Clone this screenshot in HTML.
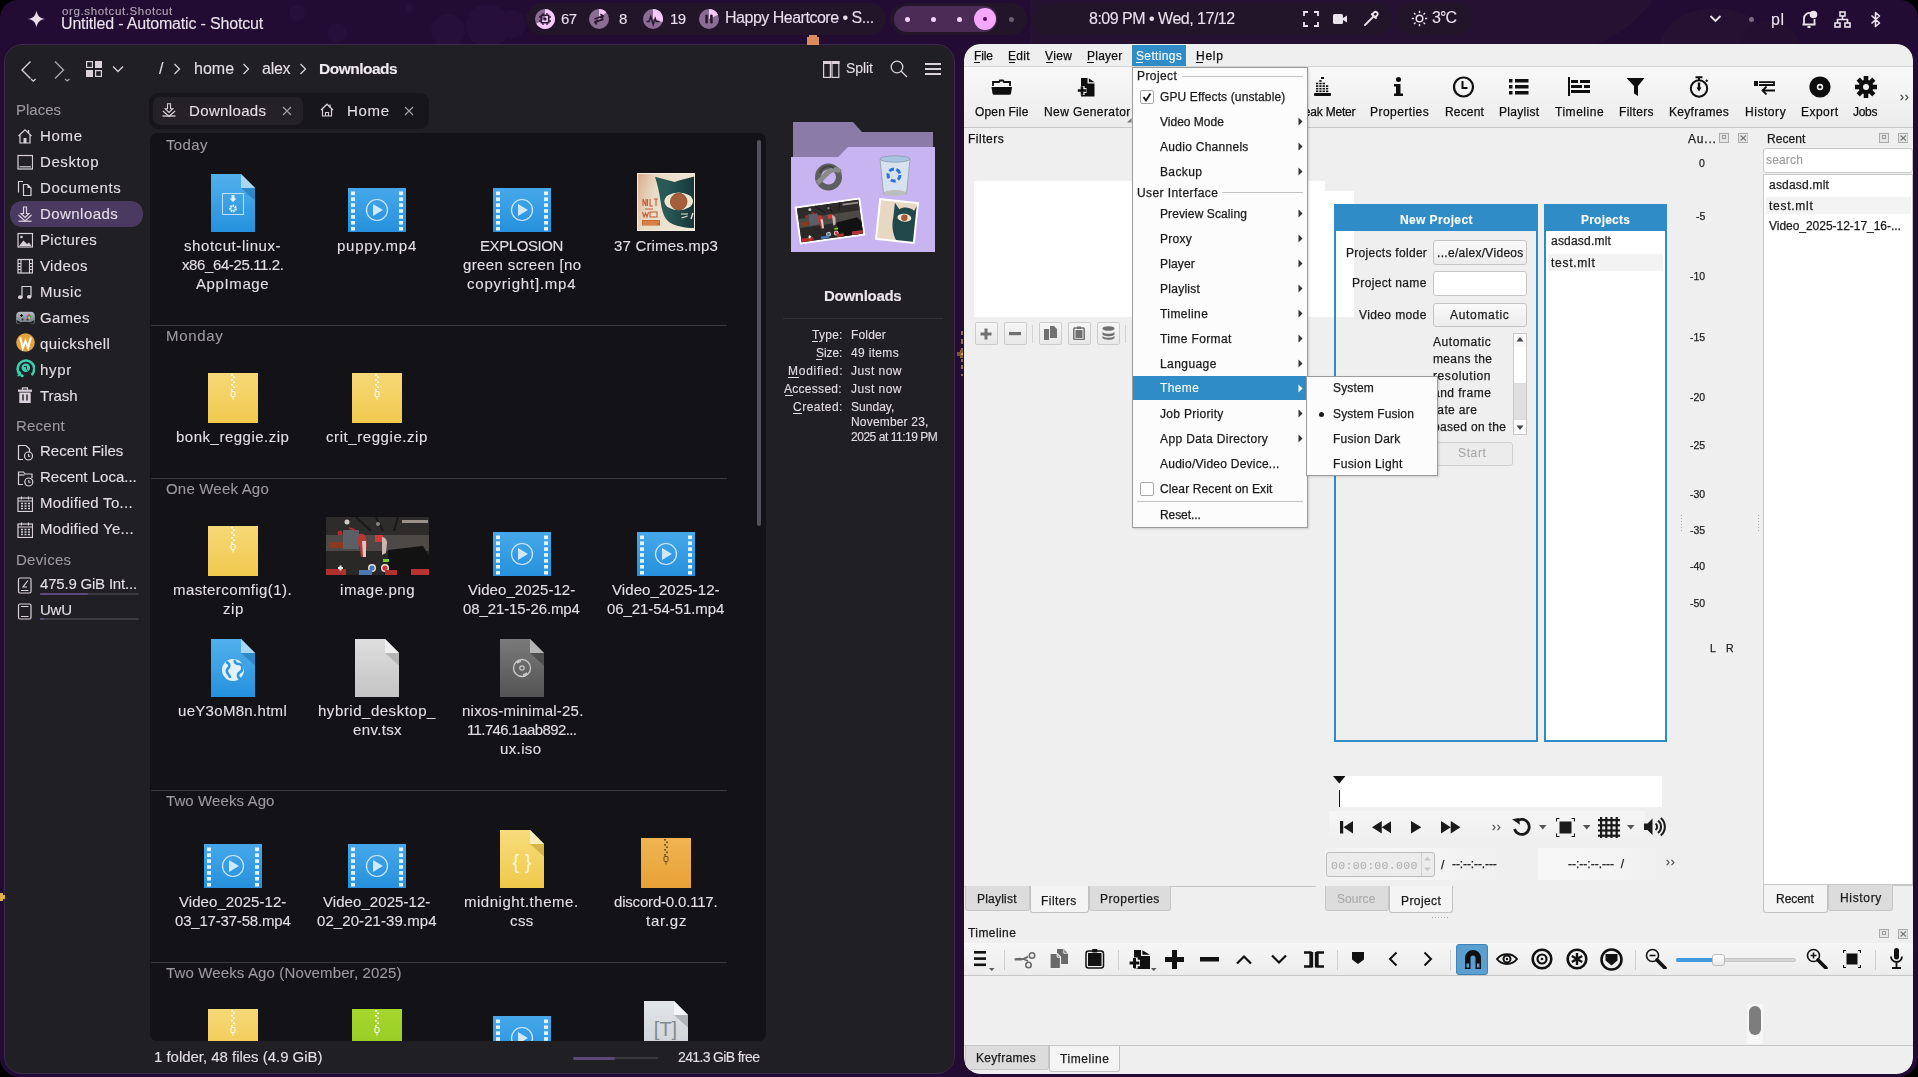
<!DOCTYPE html><html><head><meta charset="utf-8"><style>
html,body{margin:0;padding:0;width:1918px;height:1077px;overflow:hidden;background:#220c34;font-family:"Liberation Sans",sans-serif;}
body>div,body>svg,.w>div,.w>svg{position:absolute;box-sizing:border-box;}
.t{white-space:pre;line-height:1;will-change:transform;-webkit-text-stroke:0.25px currentColor;}
.l{-webkit-text-stroke:0.1px currentColor;}
</style></head><body>
<div style="left:1030px;top:-60px;width:640px;height:110px;background:#251232;border-radius:0 0 320px 0;"></div>
<div style="left:1660px;top:8px;width:110px;height:80px;background:#251232;border-radius:50%;"></div>
<div style="left:1740px;top:20px;width:60px;height:60px;background:#231030;border-radius:50%;"></div>
<div style="left:289px;top:5px;width:16px;height:16px;background:#26103a;border-radius:50%;"></div>
<div style="left:326.5px;top:23px;width:20px;height:20px;background:#26103a;border-radius:50%;"></div>
<div style="left:405px;top:4px;width:8px;height:8px;background:#26103a;border-radius:50%;"></div>
<div style="left:431px;top:14px;width:34px;height:34px;background:#26103a;border-radius:50%;"></div>
<div style="left:466px;top:4px;width:44px;height:44px;background:#26103a;border-radius:50%;"></div>
<div style="left:498px;top:10px;width:28px;height:28px;background:#26103a;border-radius:50%;"></div>
<div style="left:594px;top:2px;width:12px;height:12px;background:#26103a;border-radius:50%;"></div>
<svg style="left:0;top:0" width="20" height="20"><path d="M0 0H18A18 18 0 0 0 0 18Z" fill="#000"/></svg>
<svg style="left:1900px;top:0" width="18" height="20"><path d="M18 0H0A18 18 0 0 1 18 18Z" fill="#000"/></svg>
<svg style="left:0;top:1057px" width="20" height="20"><path d="M0 20H20A20 20 0 0 1 0 0Z" fill="#000"/></svg>
<svg style="left:1898px;top:1057px" width="20" height="20"><path d="M20 20H0A20 20 0 0 0 20 0Z" fill="#000"/></svg>
<svg style="left:27px;top:10px;" width="19" height="18" viewBox="0 0 19 18"><path d="M9.5 0.5C10.5 6 13 8.5 18.5 9C13 9.5 10.5 12 9.5 17.5C8.5 12 6 9.5 0.5 9C6 8.5 8.5 6 9.5 0.5Z" fill="#e8dde8"/></svg>
<div class="t l" style="top:6px;font-size:11.5px;color:#b4abb8;left:62px;letter-spacing:0.623px;">org.shotcut.Shotcut</div>
<div class="t l" style="top:16px;font-size:16px;color:#eae2ec;left:61px;letter-spacing:-0.171px;">Untitled - Automatic - Shotcut</div>
<div style="left:526px;top:3px;width:360px;height:32px;background:#22152a;border-radius:16px;"></div>
<svg style="left:535px;top:9px;" width="20" height="20" viewBox="0 0 20 20"><circle cx="10" cy="10" r="10" fill="#8b6c92"/><path d="M10 10L10 0A10 10 0 1 1 1.24 14.82Z" fill="#f6c9f8"/><rect x="6.3" y="6.3" width="7.4" height="7.4" fill="none" stroke="#2a1a2e" stroke-width="1.5"/><circle cx="10" cy="10" r="1.6" fill="#2a1a2e"/><path d="M8 4v2.3M12 4v2.3M8 13.7V16M12 13.7V16M4 8h2.3M4 12h2.3M13.7 8H16M13.7 12H16" stroke="#2a1a2e" stroke-width="1.3"/></svg>
<div class="t l" style="top:11px;font-size:15px;color:#e9dfeb;left:561px;letter-spacing:-0.635px;">67</div>
<svg style="left:589px;top:9px;" width="20" height="20" viewBox="0 0 20 20"><circle cx="10" cy="10" r="10" fill="#8b6c92"/><path d="M10 10L10 0A10 10 0 0 1 17.29 3.15Z" fill="#f6c9f8"/><path d="M5.5 10L13.8 7M11.3 5.2l2.9 1.7-1.5 2.8M14.5 10.2L6.2 13.2M8.7 11l-2.9 2.1 1.9 2.5" stroke="#2a1a2e" stroke-width="1.7" fill="none" stroke-linejoin="round"/></svg>
<div class="t l" style="top:11px;font-size:15px;color:#e9dfeb;left:619px;">8</div>
<svg style="left:643px;top:9px;" width="20" height="20" viewBox="0 0 20 20"><circle cx="10" cy="10" r="10" fill="#8b6c92"/><path d="M10 10L10 0A10 10 0 0 1 19.51 13.09Z" fill="#f6c9f8"/><path d="M3.5 12.5h2.5l1.8-5 2.4 8 2-6 1.2 3h3" stroke="#2a1a2e" stroke-width="1.5" fill="none"/></svg>
<div class="t l" style="top:11px;font-size:15px;color:#e9dfeb;left:670px;letter-spacing:-0.635px;">19</div>
<svg style="left:699px;top:9px;" width="20" height="20" viewBox="0 0 20 20"><circle cx="10" cy="10" r="10" fill="#8b6c92"/><path d="M10 10L10 0A10 10 0 0 1 19.05 5.74Z" fill="#f6c9f8"/><rect x="6.3" y="5.5" width="2.6" height="9" rx="1.2" fill="#2a1a2e"/><rect x="11.1" y="5.5" width="2.6" height="9" rx="1.2" fill="#2a1a2e"/></svg>
<div class="t l" style="top:10px;font-size:16px;color:#e9dfeb;left:725px;letter-spacing:-0.492px;">Happy Heartcore • S...</div>
<div style="left:890px;top:3px;width:137px;height:32px;background:#22152a;border-radius:16px;"></div>
<div style="left:894px;top:6px;width:103px;height:26px;background:#4b2c56;border-radius:13px;"></div>
<div style="left:905.0px;top:16.8px;width:5px;height:5px;background:#f7d0fa;border-radius:50%;"></div>
<div style="left:931.0px;top:16.8px;width:5px;height:5px;background:#f7d0fa;border-radius:50%;"></div>
<div style="left:957.0px;top:16.8px;width:5px;height:5px;background:#f7d0fa;border-radius:50%;"></div>
<div style="left:974px;top:8px;width:22px;height:22px;background:#f6a9fa;border-radius:50%;"></div>
<div style="left:983px;top:17px;width:4px;height:4px;background:#5a0a66;border-radius:50%;"></div>
<div style="left:1008.5px;top:16.8px;width:5px;height:5px;background:#6b5d70;border-radius:50%;"></div>
<div style="left:1032px;top:3px;width:360px;height:32px;background:#22152a;border-radius:16px;"></div>
<div class="t l" style="top:11px;font-size:16px;color:#eae2ec;left:1089px;letter-spacing:-0.500px;">8:09 PM • Wed, 17/12</div>
<svg style="left:1303px;top:11px;" width="16" height="16" viewBox="0 0 16 16"><path d="M1 5V1h4M11 1h4v4M15 11v4h-4M5 15H1v-4" stroke="#eae2ec" stroke-width="1.8" fill="none"/></svg>
<svg style="left:1332px;top:12px;" width="16" height="14" viewBox="0 0 16 14"><rect x="1" y="2" width="10" height="10" rx="1.5" fill="#eae2ec"/><path d="M11 6l4-2.5v7L11 8Z" fill="#eae2ec"/></svg>
<svg style="left:1363px;top:10px;" width="16" height="17" viewBox="0 0 16 17"><path d="M2 15l8-8M9 4l4 4M11 2.5a1.8 1.8 0 0 1 3 3l-2 2-3-3z" stroke="#eae2ec" stroke-width="1.8" fill="none" stroke-linecap="round"/></svg>
<div style="left:1396px;top:3px;width:76px;height:32px;background:#22152a;border-radius:16px;"></div>
<svg style="left:1411px;top:10px;" width="17" height="17" viewBox="0 0 17 17"><circle cx="8.5" cy="8.5" r="3.3" fill="none" stroke="#eae2ec" stroke-width="1.5"/><path d="M8.5 0.8v2.2M8.5 14v2.2M0.8 8.5H3M14 8.5h2.2M3 3l1.5 1.5M12.5 12.5L14 14M14 3l-1.5 1.5M4.5 12.5L3 14" stroke="#eae2ec" stroke-width="1.4"/></svg>
<div class="t l" style="top:10px;font-size:16px;color:#eae2ec;left:1432px;letter-spacing:-0.866px;">3°C</div>
<svg style="left:1709px;top:14px;" width="13" height="9" viewBox="0 0 13 9"><path d="M1.5 2l5 5 5-5" stroke="#eae2ec" stroke-width="1.8" fill="none"/></svg>
<div style="left:1748.5px;top:16.5px;width:5px;height:5px;background:#7a6c80;border-radius:50%;"></div>
<div class="t l" style="top:12px;font-size:16px;color:#eae2ec;left:1771px;letter-spacing:0.667px;">pl</div>
<svg style="left:1801px;top:10px;" width="17" height="19" viewBox="0 0 17 19"><path d="M3 14V8.5a5.5 5.5 0 0 1 7.5-5.2" stroke="#eae2ec" stroke-width="1.8" fill="none"/><path d="M1.5 14.5h13M6.5 17h3" stroke="#eae2ec" stroke-width="1.8"/><path d="M13.5 9v5" stroke="#eae2ec" stroke-width="1.8"/><circle cx="12.5" cy="4.5" r="3.8" fill="#eae2ec"/></svg>
<svg style="left:1834px;top:11px;" width="17" height="17" viewBox="0 0 17 17"><rect x="6" y="1" width="5" height="4" fill="none" stroke="#eae2ec" stroke-width="1.6"/><rect x="1" y="12" width="5" height="4" fill="none" stroke="#eae2ec" stroke-width="1.6"/><rect x="11" y="12" width="5" height="4" fill="none" stroke="#eae2ec" stroke-width="1.6"/><path d="M8.5 5v3.5M3.5 12V8.5h10V12" stroke="#eae2ec" stroke-width="1.6" fill="none"/></svg>
<svg style="left:1870px;top:11px;" width="12" height="17" viewBox="0 0 12 17"><path d="M1.5 4.5l8 7.5-4 3.5V1.5l4 3.5-8 7.5" stroke="#eae2ec" stroke-width="1.6" fill="none" stroke-linejoin="round"/></svg>
<div style="left:4px;top:44px;width:951px;height:1030px;background:#201f23;border:1px solid #3c2a4a;border-radius:18px;"></div>
<svg style="left:19px;top:59px;overflow:visible" width="20" height="26" viewBox="0 0 20 26"><path d="M11.5 2.5L3 11l8.5 8.5" stroke="#d9d2dc" stroke-width="1.4" fill="none"/><path d="M12 20l2.3 2.2 2.3-2.2" stroke="#d9d2dc" stroke-width="1.2" fill="none"/></svg>
<svg style="left:52px;top:59px;overflow:visible" width="20" height="26" viewBox="0 0 20 26"><path d="M3 2.5L11.5 11 3 19.5" stroke="#aaa4ad" stroke-width="1.4" fill="none"/><path d="M13 20l2.2 2 2.2-2" stroke="#aaa4ad" stroke-width="1.1" fill="none"/></svg>
<svg style="left:86px;top:61px;" width="16" height="16" viewBox="0 0 16 16"><rect x="0.6" y="0.6" width="5.8" height="5.8" fill="none" stroke="#d9d2dc" stroke-width="1.2"/><rect x="9" y="0" width="7" height="7" fill="#d9d2dc"/><rect x="0" y="9" width="7" height="7" fill="#d9d2dc"/><rect x="9.6" y="9.6" width="5.8" height="5.8" fill="none" stroke="#d9d2dc" stroke-width="1.2"/></svg>
<svg style="left:112px;top:65px;" width="12" height="8" viewBox="0 0 12 8"><path d="M1 1.5l5 5 5-5" stroke="#d9d2dc" stroke-width="1.3" fill="none"/></svg>
<div class="t l" style="top:61px;font-size:16px;color:#e4dee6;left:159px;">/</div>
<svg style="left:173px;top:63px;" width="8" height="12" viewBox="0 0 8 12"><path d="M1.5 1l5 5-5 5" stroke="#d9d2dc" stroke-width="1.3" fill="none"/></svg>
<svg style="left:242px;top:63px;" width="8" height="12" viewBox="0 0 8 12"><path d="M1.5 1l5 5-5 5" stroke="#d9d2dc" stroke-width="1.3" fill="none"/></svg>
<svg style="left:299px;top:63px;" width="8" height="12" viewBox="0 0 8 12"><path d="M1.5 1l5 5-5 5" stroke="#d9d2dc" stroke-width="1.3" fill="none"/></svg>
<div class="t l" style="top:61px;font-size:16px;color:#e4dee6;left:194px;letter-spacing:0.032px;">home</div>
<div class="t l" style="top:61px;font-size:16px;color:#e4dee6;left:262px;letter-spacing:-0.244px;">alex</div>
<div class="t l" style="top:61px;font-size:15.5px;color:#f0ebf2;font-weight:700;left:319px;letter-spacing:-0.511px;">Downloads</div>
<svg style="left:823px;top:61px;" width="17" height="17" viewBox="0 0 17 17"><rect x="0.6" y="0.6" width="6.8" height="15.8" fill="none" stroke="#d9d2dc" stroke-width="1.2"/><rect x="9" y="0.6" width="6.8" height="15.8" fill="none" stroke="#d9d2dc" stroke-width="1.2"/><rect x="0" y="0" width="8" height="3" fill="#d9d2dc"/><rect x="8.5" y="0" width="8" height="3" fill="#d9d2dc"/></svg>
<div class="t l" style="top:61px;font-size:14px;color:#e4dee6;left:846px;letter-spacing:-0.064px;">Split</div>
<svg style="left:890px;top:60px;" width="18" height="18" viewBox="0 0 18 18"><circle cx="7" cy="7" r="5.8" fill="none" stroke="#d9d2dc" stroke-width="1.3"/><path d="M11 11l6 6" stroke="#d9d2dc" stroke-width="1.3"/></svg>
<div style="left:925px;top:63px;width:16px;height:2px;background:#d9d2dc;"></div>
<div style="left:925px;top:68px;width:16px;height:2px;background:#d9d2dc;"></div>
<div style="left:925px;top:73px;width:16px;height:2px;background:#d9d2dc;"></div>
<div style="left:149px;top:93px;width:280px;height:36px;background:#17161a;border-radius:9px;"></div>
<div style="left:153px;top:97px;width:150px;height:28px;background:#242228;border-radius:7px;"></div>
<svg style="left:162px;top:103px;" width="14" height="14" viewBox="0 0 14 14"><path d="M5.5 0.8h3v5h2.3L7 9.5 3.2 5.8h2.3z" stroke="#d9d2dc" stroke-width="1.1" fill="none"/><path d="M0.5 13h13" stroke="#d9d2dc" stroke-width="1.3"/><path d="M0.8 8L7 13.2 13.2 8" stroke="#d9d2dc" stroke-width="1.1" fill="none"/></svg>
<div class="t l" style="top:103px;font-size:15px;color:#e4dee6;left:189px;letter-spacing:0.355px;">Downloads</div>
<svg style="left:282px;top:106px;" width="10" height="10" viewBox="0 0 10 10"><path d="M1 1l8 8M9 1l-8 8" stroke="#a19ba5" stroke-width="1.2"/></svg>
<svg style="left:320px;top:103px;" width="14" height="14" viewBox="0 0 14 14"><path d="M1 7L7 1.2 13 7M2.5 6V13H11.5V6" stroke="#d9d2dc" stroke-width="1.2" fill="none"/><path d="M5.5 13V9.5h3V13" stroke="#d9d2dc" stroke-width="1.1" fill="none"/><path d="M10 1.5v3" stroke="#d9d2dc" stroke-width="1.3"/></svg>
<div class="t l" style="top:103px;font-size:15px;color:#e4dee6;left:347px;letter-spacing:0.679px;">Home</div>
<svg style="left:404px;top:106px;" width="10" height="10" viewBox="0 0 10 10"><path d="M1 1l8 8M9 1l-8 8" stroke="#a19ba5" stroke-width="1.2"/></svg>
<div style="left:10px;top:201px;width:133px;height:26px;background:#4a3a61;border-radius:12px;"></div>
<div class="t l" style="top:102px;font-size:15px;color:#9e99a2;left:16px;">Places</div>
<svg style="left:17px;top:128.4px;" width="16" height="16" viewBox="0 0 16 16"><path d="M1.5 8L8 1.8 14.5 8M3 6.5V15H13V6.5" stroke="#d9d2dc" stroke-width="1.2" fill="none"/><rect x="6.5" y="10" width="3" height="5" fill="#d9d2dc"/><path d="M11.5 2v3" stroke="#d9d2dc" stroke-width="1.4"/></svg>
<div class="t l" style="top:128px;font-size:15px;color:#e4dee6;left:40px;letter-spacing:0.679px;">Home</div>
<svg style="left:17px;top:154.4px;" width="16" height="16" viewBox="0 0 16 16"><rect x="1" y="1.5" width="14.5" height="13.5" fill="none" stroke="#d9d2dc" stroke-width="1.2"/><path d="M2.5 12.8h11.5" stroke="#d9d2dc" stroke-width="1.2"/></svg>
<div class="t l" style="top:154px;font-size:15px;color:#e4dee6;left:40px;letter-spacing:0.587px;">Desktop</div>
<svg style="left:17px;top:180.4px;" width="16" height="16" viewBox="0 0 16 16"><path d="M1.5 12.5V1.5H6" stroke="#d9d2dc" stroke-width="1.2" fill="none"/><path d="M6.5 4.5H10.5L14 8V15.5H6.5Z" stroke="#d9d2dc" stroke-width="1.2" fill="none"/><path d="M10.5 4.5V8H14" fill="#d9d2dc"/></svg>
<div class="t l" style="top:180px;font-size:15px;color:#e4dee6;left:40px;letter-spacing:0.598px;">Documents</div>
<svg style="left:17px;top:206.4px;" width="16" height="16" viewBox="0 0 16 16"><path d="M6.5 1h3v6.5h2.5L8 11.5 4 7.5h2.5z" stroke="#d9d2dc" stroke-width="1.2" fill="none"/><path d="M1.5 15.2h13" stroke="#d9d2dc" stroke-width="1.3"/><path d="M1.5 9L8 15 14.5 9" stroke="#d9d2dc" stroke-width="1.2" fill="none"/></svg>
<div class="t l" style="top:206px;font-size:15px;color:#e4dee6;left:40px;letter-spacing:0.443px;">Downloads</div>
<svg style="left:17px;top:232.4px;" width="16" height="16" viewBox="0 0 16 16"><rect x="1" y="1.5" width="14.5" height="13.5" fill="none" stroke="#d9d2dc" stroke-width="1.2"/><path d="M2 14L6.5 8.5 10 12 12 10.5 14.5 14z" fill="#d9d2dc"/><circle cx="4.5" cy="5" r="1.3" fill="#d9d2dc"/></svg>
<div class="t l" style="top:232px;font-size:15px;color:#e4dee6;left:40px;letter-spacing:0.352px;">Pictures</div>
<svg style="left:17px;top:258.4px;" width="16" height="16" viewBox="0 0 16 16"><rect x="1" y="1.5" width="14.5" height="13.5" fill="none" stroke="#d9d2dc" stroke-width="1.2"/><path d="M4 1.5v13.5M12.5 1.5v13.5M1 5.5h3M1 8.5h3M1 11.5h3M12.5 5.5h3M12.5 8.5h3M12.5 11.5h3" stroke="#d9d2dc" stroke-width="1.1"/></svg>
<div class="t l" style="top:258px;font-size:15px;color:#e4dee6;left:40px;letter-spacing:0.391px;">Videos</div>
<svg style="left:17px;top:284.4px;" width="16" height="16" viewBox="0 0 16 16"><path d="M5 13V2.5h9v10" stroke="#d9d2dc" stroke-width="1.2" fill="none"/><ellipse cx="3.3" cy="13.2" rx="2.3" ry="1.9" fill="#d9d2dc"/><ellipse cx="12.2" cy="12.8" rx="2.3" ry="1.9" fill="#d9d2dc"/></svg>
<div class="t l" style="top:284px;font-size:15px;color:#e4dee6;left:40px;letter-spacing:0.570px;">Music</div>
<svg style="left:16px;top:311.4px;" width="19" height="14" viewBox="0 0 19 14"><defs><linearGradient id="gp" x1="0" y1="0" x2="0" y2="1"><stop offset="0" stop-color="#b8bec6"/><stop offset="1" stop-color="#6c737c"/></linearGradient></defs><path d="M4 0.8h11c2.2 0 3.5 1.5 3.8 3.5l.2 6c0 2-1.6 3.2-3.2 2.4L13 11H6l-2.8 1.7C1.6 13.5 0 12.3 0 10.3l.2-6C.5 2.3 1.8.8 4 .8z" fill="url(#gp)"/><path d="M0.5 9c0 3 2 4 3.5 3L6 11H4z M18.5 9c0 3-2 4-3.5 3L13 11h2z" fill="#1a1a1a"/><path d="M4 4.5h3M5.5 3v3" stroke="#111" stroke-width="1.2"/><circle cx="13" cy="4" r="0.9" fill="#d33"/><circle cx="14.7" cy="5.5" r="0.9" fill="#3a3"/><circle cx="11.5" cy="5.5" r="0.9" fill="#36d"/><circle cx="13" cy="7" r="0.9" fill="#eb2"/><circle cx="6.5" cy="8.5" r="1.1" fill="#333"/><circle cx="11.5" cy="8.5" r="1.1" fill="#333"/></svg>
<div class="t l" style="top:310px;font-size:15px;color:#e4dee6;left:40px;letter-spacing:0.276px;">Games</div>
<svg style="left:16px;top:333.4px;" width="19" height="19" viewBox="0 0 19 19"><circle cx="9.5" cy="9.5" r="9.3" fill="#e4a43a"/><path d="M4.2 4.5l2.6 10.5 2.7-7 2.6 7 2.7-10.5" stroke="#fff" stroke-width="2.1" fill="none" stroke-linejoin="miter"/></svg>
<div class="t l" style="top:336px;font-size:15px;color:#e4dee6;left:40px;letter-spacing:0.454px;">quickshell</div>
<svg style="left:16px;top:359.4px;" width="19" height="19" viewBox="0 0 19 19"><path d="M5 16.5A8.3 8.3 0 1 1 15.5 16" stroke="#3ccfb0" stroke-width="2.6" fill="none"/><circle cx="9.8" cy="8.8" r="4.3" fill="#3ccfb0"/><path d="M8 7.5h2.5v2.5M11 10.5l1 1.5" stroke="#1f2a2a" stroke-width="1" fill="none"/><circle cx="3.6" cy="13.8" r="1.6" fill="#3ccfb0"/><circle cx="6.2" cy="16.8" r="1.5" fill="#3ccfb0"/><circle cx="2.2" cy="16.6" r="0.9" fill="#3ccfb0"/></svg>
<div class="t l" style="top:362px;font-size:15px;color:#e4dee6;left:40px;letter-spacing:0.657px;">hypr</div>
<svg style="left:17px;top:387.4px;" width="16" height="17" viewBox="0 0 16 17"><path d="M5.5 2.8V0.8h5v2" stroke="#d9d2dc" stroke-width="1.2" fill="none"/><rect x="1" y="2.6" width="14" height="2.2" fill="#d9d2dc"/><path d="M2.3 5.5h11.4V16H2.3Z" fill="#d9d2dc"/><path d="M6 7.5v6M10 7.5v6" stroke="#201f23" stroke-width="1.4"/></svg>
<div class="t l" style="top:388px;font-size:15px;color:#e4dee6;left:40px;letter-spacing:-0.034px;">Trash</div>
<div class="t l" style="top:418px;font-size:15px;color:#9e99a2;left:16px;letter-spacing:0.225px;">Recent</div>
<svg style="left:17px;top:444px;" width="17" height="17" viewBox="0 0 17 17"><path d="M6 15.5H1.5V1.5H9l3.5 3.5V8" stroke="#d9d2dc" stroke-width="1.2" fill="none"/><circle cx="11.5" cy="12" r="4" fill="#201f23" stroke="#d9d2dc" stroke-width="1.2"/><path d="M11.5 10v2.2h1.8" stroke="#d9d2dc" stroke-width="1.1" fill="none"/></svg>
<div class="t l" style="top:443px;font-size:15px;color:#e4dee6;left:40px;">Recent Files</div>
<svg style="left:17px;top:470px;" width="17" height="17" viewBox="0 0 17 17"><path d="M6 14.5H1.5V2h5l1.5 2H15v4" stroke="#d9d2dc" stroke-width="1.2" fill="none"/><path d="M1.5 5h6" stroke="#d9d2dc" stroke-width="1.2"/><circle cx="11.8" cy="12" r="4" fill="#201f23" stroke="#d9d2dc" stroke-width="1.2"/><path d="M11.8 10v2.2h1.8" stroke="#d9d2dc" stroke-width="1.1" fill="none"/></svg>
<div class="t l" style="top:469px;font-size:15px;color:#e4dee6;left:40px;">Recent Loca...</div>
<svg style="left:17px;top:496px;" width="16" height="16" viewBox="0 0 16 16"><rect x="1" y="2" width="14.5" height="13.5" fill="none" stroke="#d9d2dc" stroke-width="1.2"/><path d="M4.5 0.5v3M11.5 0.5v3M1 5h14.5" stroke="#d9d2dc" stroke-width="1.2"/><path d="M4 7.5h2M7.5 7.5h2M11 7.5h2M4 10h2M7.5 10h2M11 10h2M4 12.5h2M7.5 12.5h2M11 12.5h2" stroke="#d9d2dc" stroke-width="1.3"/></svg>
<div class="t l" style="top:495px;font-size:15px;color:#e4dee6;left:40px;letter-spacing:0.280px;">Modified To...</div>
<svg style="left:17px;top:522px;" width="16" height="16" viewBox="0 0 16 16"><rect x="1" y="2" width="14.5" height="13.5" fill="none" stroke="#d9d2dc" stroke-width="1.2"/><path d="M4.5 0.5v3M11.5 0.5v3M1 5h14.5" stroke="#d9d2dc" stroke-width="1.2"/><path d="M4 7.5h2M7.5 7.5h2M11 7.5h2M4 10h2M7.5 10h2M11 10h2M4 12.5h2M7.5 12.5h2M11 12.5h2" stroke="#d9d2dc" stroke-width="1.3"/></svg>
<div class="t l" style="top:521px;font-size:15px;color:#e4dee6;left:40px;letter-spacing:0.278px;">Modified Ye...</div>
<div class="t l" style="top:552px;font-size:15px;color:#9e99a2;left:16px;letter-spacing:0.283px;">Devices</div>
<svg style="left:17px;top:577px;" width="16" height="17" viewBox="0 0 16 17"><rect x="1.5" y="1" width="12.5" height="15" rx="1.5" fill="none" stroke="#d9d2dc" stroke-width="1.2"/><path d="M4 13.5h7.5M11 3.5L6 10h4" stroke="#d9d2dc" stroke-width="1.2" fill="none"/></svg>
<div class="t l" style="top:576px;font-size:15px;color:#e4dee6;left:40px;letter-spacing:-0.200px;">475.9 GiB Int...</div>
<div style="left:40px;top:592.5px;width:99px;height:2px;background:#3d3a42;border-radius:1px;"></div>
<div style="left:40px;top:592.5px;width:48px;height:2px;background:#5b4a78;border-radius:1px;"></div>
<svg style="left:17px;top:603px;" width="16" height="17" viewBox="0 0 16 17"><rect x="1.5" y="1" width="12.5" height="15" rx="1.5" fill="none" stroke="#d9d2dc" stroke-width="1.2"/><path d="M4 13.5h7.5M4 3.5h7.5" stroke="#d9d2dc" stroke-width="1.2" fill="none"/></svg>
<div class="t l" style="top:602px;font-size:15px;color:#e4dee6;left:40px;letter-spacing:-0.224px;">UwU</div>
<div style="left:40px;top:618px;width:99px;height:2px;background:#3d3a42;border-radius:1px;"></div>
<div style="left:40px;top:618px;width:4px;height:2px;background:#5b4a78;border-radius:1px;"></div>
<div style="left:150px;top:133px;width:616px;height:908px;background:#131217;border-radius:7px;"></div>
<div style="left:757px;top:140px;width:4px;height:386px;background:#55515a;border-radius:2px;"></div>
<div class="t l" style="top:137px;font-size:15px;color:#9e99a2;left:166px;letter-spacing:0.356px;">Today</div>
<div style="left:151px;top:325px;width:576px;height:1px;background:#3a383e;"></div>
<div class="t l" style="top:328px;font-size:15px;color:#9e99a2;left:166px;letter-spacing:0.657px;">Monday</div>
<div style="left:151px;top:478px;width:576px;height:1px;background:#3a383e;"></div>
<div class="t l" style="top:481px;font-size:15px;color:#9e99a2;left:166px;letter-spacing:0.191px;">One Week Ago</div>
<div style="left:151px;top:790px;width:576px;height:1px;background:#3a383e;"></div>
<div class="t l" style="top:793px;font-size:15px;color:#9e99a2;left:166px;letter-spacing:0.095px;">Two Weeks Ago</div>
<div style="left:151px;top:962px;width:576px;height:1px;background:#3a383e;"></div>
<div class="t l" style="top:965px;font-size:15px;color:#9e99a2;left:166px;letter-spacing:0.135px;">Two Weeks Ago (November, 2025)</div>
<svg style="left:211px;top:174px;" width="44" height="58" viewBox="0 0 44 58"><defs><linearGradient id="g1" x1="0" y1="0" x2="0" y2="1"><stop offset="0" stop-color="#52b0ec"/><stop offset="1" stop-color="#2591dd"/></linearGradient></defs><path d="M0 0H30L44 14V58H0Z" fill="url(#g1)"/><path d="M30 14L44 26.6V14Z" fill="#1a6fb0" opacity="0.55"/><path d="M30 0V14H44Z" fill="#a9d8f5"/><g transform="translate(2 4)"><rect x="9.5" y="15.5" width="21" height="21" fill="none" stroke="#bfe0f7" stroke-width="1"/><path d="M18.5 17h3v3.5h2L20 24l-3.5-3.5h2z" fill="#e8f4fc"/><circle cx="20" cy="30.5" r="2.6" fill="none" stroke="#e8f4fc" stroke-width="2.6" stroke-dasharray="1.5 0.8"/><circle cx="20" cy="30.5" r="1.2" fill="#3a9ce4"/></g></svg>
<div class="t l" style="top:238px;font-size:15px;color:#e4dee6;left:184px;letter-spacing:0.565px;">shotcut-linux-</div>
<div class="t l" style="top:257px;font-size:15px;color:#e4dee6;left:182px;letter-spacing:-0.390px;">x86_64-25.11.2.</div>
<div class="t l" style="top:276px;font-size:15px;color:#e4dee6;left:196px;letter-spacing:0.610px;">AppImage</div>
<svg style="left:348px;top:188px;" width="58" height="44" viewBox="0 0 58 44"><defs><linearGradient id="g2" x1="0" y1="0" x2="0" y2="1"><stop offset="0" stop-color="#46a8ea"/><stop offset="1" stop-color="#2590dd"/></linearGradient></defs><rect width="58" height="44" fill="url(#g2)"/><rect x="3" y="3.5" width="4" height="3.6" fill="#e6f3fc"/><rect x="51" y="3.5" width="4" height="3.6" fill="#e6f3fc"/><rect x="3" y="9.4" width="4" height="3.6" fill="#e6f3fc"/><rect x="51" y="9.4" width="4" height="3.6" fill="#e6f3fc"/><rect x="3" y="15.3" width="4" height="3.6" fill="#e6f3fc"/><rect x="51" y="15.3" width="4" height="3.6" fill="#e6f3fc"/><rect x="3" y="21.2" width="4" height="3.6" fill="#e6f3fc"/><rect x="51" y="21.2" width="4" height="3.6" fill="#e6f3fc"/><rect x="3" y="27.1" width="4" height="3.6" fill="#e6f3fc"/><rect x="51" y="27.1" width="4" height="3.6" fill="#e6f3fc"/><rect x="3" y="33.0" width="4" height="3.6" fill="#e6f3fc"/><rect x="51" y="33.0" width="4" height="3.6" fill="#e6f3fc"/><rect x="3" y="38.9" width="4" height="3.6" fill="#e6f3fc"/><rect x="51" y="38.9" width="4" height="3.6" fill="#e6f3fc"/><circle cx="29.0" cy="22.0" r="10.5" fill="none" stroke="#cfe8fa" stroke-width="1.2"/><path d="M25.0 16.0L35.0 22.0L25.0 28.0Z" fill="#cfe8fa"/></svg>
<div class="t l" style="top:238px;font-size:15px;color:#e4dee6;left:337px;letter-spacing:0.768px;">puppy.mp4</div>
<svg style="left:493px;top:188px;" width="58" height="44" viewBox="0 0 58 44"><defs><linearGradient id="g3" x1="0" y1="0" x2="0" y2="1"><stop offset="0" stop-color="#46a8ea"/><stop offset="1" stop-color="#2590dd"/></linearGradient></defs><rect width="58" height="44" fill="url(#g3)"/><rect x="3" y="3.5" width="4" height="3.6" fill="#e6f3fc"/><rect x="51" y="3.5" width="4" height="3.6" fill="#e6f3fc"/><rect x="3" y="9.4" width="4" height="3.6" fill="#e6f3fc"/><rect x="51" y="9.4" width="4" height="3.6" fill="#e6f3fc"/><rect x="3" y="15.3" width="4" height="3.6" fill="#e6f3fc"/><rect x="51" y="15.3" width="4" height="3.6" fill="#e6f3fc"/><rect x="3" y="21.2" width="4" height="3.6" fill="#e6f3fc"/><rect x="51" y="21.2" width="4" height="3.6" fill="#e6f3fc"/><rect x="3" y="27.1" width="4" height="3.6" fill="#e6f3fc"/><rect x="51" y="27.1" width="4" height="3.6" fill="#e6f3fc"/><rect x="3" y="33.0" width="4" height="3.6" fill="#e6f3fc"/><rect x="51" y="33.0" width="4" height="3.6" fill="#e6f3fc"/><rect x="3" y="38.9" width="4" height="3.6" fill="#e6f3fc"/><rect x="51" y="38.9" width="4" height="3.6" fill="#e6f3fc"/><circle cx="29.0" cy="22.0" r="10.5" fill="none" stroke="#cfe8fa" stroke-width="1.2"/><path d="M25.0 16.0L35.0 22.0L25.0 28.0Z" fill="#cfe8fa"/></svg>
<div class="t l" style="top:238px;font-size:15px;color:#e4dee6;left:480px;letter-spacing:-0.406px;">EXPLOSION</div>
<div class="t l" style="top:257px;font-size:15px;color:#e4dee6;left:463px;letter-spacing:0.372px;">green screen [no</div>
<div class="t l" style="top:276px;font-size:15px;color:#e4dee6;left:467px;letter-spacing:0.782px;">copyright].mp4</div>
<svg style="left:637px;top:173px;" width="58" height="58" viewBox="0 0 58 58"><defs><linearGradient id="g4" x1="0" y1="0" x2="1" y2="0.3"><stop offset="0" stop-color="#d9ae8e"/><stop offset="0.35" stop-color="#eadcc6"/><stop offset="1" stop-color="#efe7d6"/></linearGradient><linearGradient id="g4h" x1="0" y1="0" x2="1" y2="0"><stop offset="0.3" stop-color="#285a58"/><stop offset="1" stop-color="#173638"/></linearGradient></defs><rect width="58" height="58" fill="#f3ece2"/><rect x="1" y="1" width="56" height="56" fill="url(#g4)"/><path d="M18 3.8L37.6 9C43 7 50 5.5 57 3.5V55C48 55 38 53 32 49 27 45 25 38 23.5 28 22.5 20 20.5 12 18 3.8Z" fill="url(#g4h)"/><ellipse cx="41.7" cy="28.3" rx="14.3" ry="8.9" fill="#ede6d2"/><circle cx="41.7" cy="28.6" r="8.3" fill="#a4603a" stroke="#8e4426" stroke-width="0.8"/><path d="M44 41h7M44.5 45l6-2" stroke="#e8e4dc" stroke-width="1.2"/><path d="M56 40l-2 6" stroke="#e8e4dc" stroke-width="1.4"/><path d="M6 26v7M6 26l3 7V26M10.5 26v7M13 26v7h3M17 26h4M19 26v7" stroke="#c45a34" stroke-width="1.1" fill="none"/><path d="M8 36h8" stroke="#c45a34" stroke-width="1"/><path d="M5.5 39l1.5 5 1.5-4 1.5 4 1.5-5M13 39h7v5h-7z" stroke="#c45a34" stroke-width="1.1" fill="none"/><rect x="5" y="47" width="18" height="5.5" fill="#c8692c"/><path d="M6 49h16M6 51h14" stroke="#f0c090" stroke-width="0.6"/></svg>
<div class="t l" style="top:238px;font-size:15px;color:#e4dee6;left:614px;letter-spacing:0.179px;">37 Crimes.mp3</div>
<svg style="left:208px;top:373px;" width="50" height="50" viewBox="0 0 50 50"><defs><linearGradient id="g5" x1="0" y1="0" x2="0" y2="1"><stop offset="0" stop-color="#f6d877"/><stop offset="1" stop-color="#f0c94e"/></linearGradient></defs><rect width="50" height="50" fill="url(#g5)"/><rect x="23.0" y="1.0" width="2" height="1.6" fill="#fff" opacity="0.9"/><rect x="25.0" y="3.5" width="2" height="1.6" fill="#fff" opacity="0.9"/><rect x="23.0" y="6.0" width="2" height="1.6" fill="#fff" opacity="0.9"/><rect x="25.0" y="8.5" width="2" height="1.6" fill="#fff" opacity="0.9"/><rect x="23.0" y="11.0" width="2" height="1.6" fill="#fff" opacity="0.9"/><rect x="25.0" y="13.5" width="2" height="1.6" fill="#fff" opacity="0.9"/><rect x="23.0" y="16.0" width="2" height="1.6" fill="#fff" opacity="0.9"/><rect x="23.0" y="18.5" width="4" height="5" rx="1" fill="none" stroke="#fff" stroke-width="1"/><path d="M25.0 23.5v3" stroke="#fff" stroke-width="1"/></svg>
<div class="t l" style="top:429px;font-size:15px;color:#e4dee6;left:176px;letter-spacing:0.503px;">bonk_reggie.zip</div>
<svg style="left:352px;top:373px;" width="50" height="50" viewBox="0 0 50 50"><defs><linearGradient id="g6" x1="0" y1="0" x2="0" y2="1"><stop offset="0" stop-color="#f6d877"/><stop offset="1" stop-color="#f0c94e"/></linearGradient></defs><rect width="50" height="50" fill="url(#g6)"/><rect x="23.0" y="1.0" width="2" height="1.6" fill="#fff" opacity="0.9"/><rect x="25.0" y="3.5" width="2" height="1.6" fill="#fff" opacity="0.9"/><rect x="23.0" y="6.0" width="2" height="1.6" fill="#fff" opacity="0.9"/><rect x="25.0" y="8.5" width="2" height="1.6" fill="#fff" opacity="0.9"/><rect x="23.0" y="11.0" width="2" height="1.6" fill="#fff" opacity="0.9"/><rect x="25.0" y="13.5" width="2" height="1.6" fill="#fff" opacity="0.9"/><rect x="23.0" y="16.0" width="2" height="1.6" fill="#fff" opacity="0.9"/><rect x="23.0" y="18.5" width="4" height="5" rx="1" fill="none" stroke="#fff" stroke-width="1"/><path d="M25.0 23.5v3" stroke="#fff" stroke-width="1"/></svg>
<div class="t l" style="top:429px;font-size:15px;color:#e4dee6;left:326px;letter-spacing:0.570px;">crit_reggie.zip</div>
<svg style="left:208px;top:526px;" width="50" height="50" viewBox="0 0 50 50"><defs><linearGradient id="g7" x1="0" y1="0" x2="0" y2="1"><stop offset="0" stop-color="#f6d877"/><stop offset="1" stop-color="#f0c94e"/></linearGradient></defs><rect width="50" height="50" fill="url(#g7)"/><rect x="23.0" y="1.0" width="2" height="1.6" fill="#fff" opacity="0.9"/><rect x="25.0" y="3.5" width="2" height="1.6" fill="#fff" opacity="0.9"/><rect x="23.0" y="6.0" width="2" height="1.6" fill="#fff" opacity="0.9"/><rect x="25.0" y="8.5" width="2" height="1.6" fill="#fff" opacity="0.9"/><rect x="23.0" y="11.0" width="2" height="1.6" fill="#fff" opacity="0.9"/><rect x="25.0" y="13.5" width="2" height="1.6" fill="#fff" opacity="0.9"/><rect x="23.0" y="16.0" width="2" height="1.6" fill="#fff" opacity="0.9"/><rect x="23.0" y="18.5" width="4" height="5" rx="1" fill="none" stroke="#fff" stroke-width="1"/><path d="M25.0 23.5v3" stroke="#fff" stroke-width="1"/></svg>
<div class="t l" style="top:582px;font-size:15px;color:#e4dee6;left:173px;letter-spacing:0.402px;">mastercomfig(1).</div>
<div class="t l" style="top:601px;font-size:15px;color:#e4dee6;left:223px;letter-spacing:0.588px;">zip</div>
<svg style="left:326px;top:517px;" width="103" height="58" viewBox="0 0 103 58"><rect width="103" height="58" fill="#3b3937"/><path d="M0 0H103V18H0Z" fill="#2e2c2b"/><path d="M30 0L45 14M50 0L57 14M72 0L68 14" stroke="#1b1a1a" stroke-width="2"/><path d="M0 18H103V34H0Z" fill="#4c4946"/><circle cx="21" cy="5" r="2.5" fill="#cfcac4"/><circle cx="52" cy="7" r="2" fill="#8a8580"/><path d="M17 13H33V32H17Z" fill="#5b6068"/><path d="M3 25H17V31H3Z" fill="#8a3820"/><circle cx="14" cy="16" r="2.5" fill="#b02a2a"/><path d="M23 10l6 2v2l-6-2z" fill="#b03030"/><path d="M0 34H103V58H0Z" fill="#2a2826"/><path d="M33 17c3-1 6 0 7 3l1 8-2 12h-4l-1-10-3-4z" fill="#b13a36"/><path d="M36 24h4v16h-3z" fill="#d8c8c0"/><path d="M49 18h8v7h-8z" fill="#d43a3a"/><path d="M56 20c3 0 5 3 5 6l-1 10-4 2z" fill="#c9b8b0"/><path d="M62 33l35-4 6 10v19H58l4-12z" fill="#121212"/><path d="M57 42h6v3h-6z" fill="#7ad02a"/><path d="M0 52h20v6H0z" fill="#b03030"/><path d="M12 51h5M14.5 48.5v5" stroke="#eee" stroke-width="2"/><circle cx="46" cy="51" r="4" fill="#e8e0d8"/><circle cx="46" cy="51" r="2.6" fill="#4a78b0"/><path d="M33 53h13v5H33z" fill="#4a78b0"/><circle cx="59" cy="51" r="4" fill="#e8e0d8"/><circle cx="59" cy="51" r="2.6" fill="#c03838"/><path d="M59 53h12v5H59z" fill="#b03030"/><path d="M85 52h18v6H85z" fill="#b83434"/><path d="M76 3h26v3H76z" fill="#9a9288"/></svg>
<div class="t l" style="top:582px;font-size:15px;color:#e4dee6;left:340px;letter-spacing:0.563px;">image.png</div>
<svg style="left:493px;top:532px;" width="58" height="44" viewBox="0 0 58 44"><defs><linearGradient id="g8" x1="0" y1="0" x2="0" y2="1"><stop offset="0" stop-color="#46a8ea"/><stop offset="1" stop-color="#2590dd"/></linearGradient></defs><rect width="58" height="44" fill="url(#g8)"/><rect x="3" y="3.5" width="4" height="3.6" fill="#e6f3fc"/><rect x="51" y="3.5" width="4" height="3.6" fill="#e6f3fc"/><rect x="3" y="9.4" width="4" height="3.6" fill="#e6f3fc"/><rect x="51" y="9.4" width="4" height="3.6" fill="#e6f3fc"/><rect x="3" y="15.3" width="4" height="3.6" fill="#e6f3fc"/><rect x="51" y="15.3" width="4" height="3.6" fill="#e6f3fc"/><rect x="3" y="21.2" width="4" height="3.6" fill="#e6f3fc"/><rect x="51" y="21.2" width="4" height="3.6" fill="#e6f3fc"/><rect x="3" y="27.1" width="4" height="3.6" fill="#e6f3fc"/><rect x="51" y="27.1" width="4" height="3.6" fill="#e6f3fc"/><rect x="3" y="33.0" width="4" height="3.6" fill="#e6f3fc"/><rect x="51" y="33.0" width="4" height="3.6" fill="#e6f3fc"/><rect x="3" y="38.9" width="4" height="3.6" fill="#e6f3fc"/><rect x="51" y="38.9" width="4" height="3.6" fill="#e6f3fc"/><circle cx="29.0" cy="22.0" r="10.5" fill="none" stroke="#cfe8fa" stroke-width="1.2"/><path d="M25.0 16.0L35.0 22.0L25.0 28.0Z" fill="#cfe8fa"/></svg>
<div class="t l" style="top:582px;font-size:15px;color:#e4dee6;left:468px;letter-spacing:0.059px;">Video_2025-12-</div>
<div class="t l" style="top:601px;font-size:15px;color:#e4dee6;left:463px;letter-spacing:-0.105px;">08_21-15-26.mp4</div>
<svg style="left:637px;top:532px;" width="58" height="44" viewBox="0 0 58 44"><defs><linearGradient id="g9" x1="0" y1="0" x2="0" y2="1"><stop offset="0" stop-color="#46a8ea"/><stop offset="1" stop-color="#2590dd"/></linearGradient></defs><rect width="58" height="44" fill="url(#g9)"/><rect x="3" y="3.5" width="4" height="3.6" fill="#e6f3fc"/><rect x="51" y="3.5" width="4" height="3.6" fill="#e6f3fc"/><rect x="3" y="9.4" width="4" height="3.6" fill="#e6f3fc"/><rect x="51" y="9.4" width="4" height="3.6" fill="#e6f3fc"/><rect x="3" y="15.3" width="4" height="3.6" fill="#e6f3fc"/><rect x="51" y="15.3" width="4" height="3.6" fill="#e6f3fc"/><rect x="3" y="21.2" width="4" height="3.6" fill="#e6f3fc"/><rect x="51" y="21.2" width="4" height="3.6" fill="#e6f3fc"/><rect x="3" y="27.1" width="4" height="3.6" fill="#e6f3fc"/><rect x="51" y="27.1" width="4" height="3.6" fill="#e6f3fc"/><rect x="3" y="33.0" width="4" height="3.6" fill="#e6f3fc"/><rect x="51" y="33.0" width="4" height="3.6" fill="#e6f3fc"/><rect x="3" y="38.9" width="4" height="3.6" fill="#e6f3fc"/><rect x="51" y="38.9" width="4" height="3.6" fill="#e6f3fc"/><circle cx="29.0" cy="22.0" r="10.5" fill="none" stroke="#cfe8fa" stroke-width="1.2"/><path d="M25.0 16.0L35.0 22.0L25.0 28.0Z" fill="#cfe8fa"/></svg>
<div class="t l" style="top:582px;font-size:15px;color:#e4dee6;left:612px;letter-spacing:0.082px;">Video_2025-12-</div>
<div class="t l" style="top:601px;font-size:15px;color:#e4dee6;left:607px;letter-spacing:-0.076px;">06_21-54-51.mp4</div>
<svg style="left:211px;top:639px;" width="44" height="58" viewBox="0 0 44 58"><defs><linearGradient id="g10" x1="0" y1="0" x2="0" y2="1"><stop offset="0" stop-color="#52b0ec"/><stop offset="1" stop-color="#2591dd"/></linearGradient></defs><path d="M0 0H30L44 14V58H0Z" fill="url(#g10)"/><path d="M30 14L44 26.6V14Z" fill="#1a6fb0" opacity="0.55"/><path d="M30 0V14H44Z" fill="#a9d8f5"/><circle cx="22" cy="31" r="11" fill="#e3f1fb"/><path d="M15 23c3 1 4 3 3 5s-3 2-2 5 3 3 3 6M24 21c-1 2 1 4 4 4s4 3 3 6-4 2-4 5 1 4 3 4" stroke="#2f96dd" stroke-width="2.6" fill="none"/></svg>
<div class="t l" style="top:703px;font-size:15px;color:#e4dee6;left:178px;letter-spacing:0.308px;">ueY3oM8n.html</div>
<svg style="left:355px;top:639px;" width="44" height="58" viewBox="0 0 44 58"><defs><linearGradient id="g11" x1="0" y1="0" x2="0" y2="1"><stop offset="0" stop-color="#dedede"/><stop offset="1" stop-color="#c4c4c4"/></linearGradient></defs><path d="M0 0H30L44 14V58H0Z" fill="url(#g11)"/><path d="M30 14L44 26.6V14Z" fill="#999" opacity="0.55"/><path d="M30 0V14H44Z" fill="#efefef"/></svg>
<div class="t l" style="top:703px;font-size:15px;color:#e4dee6;left:318px;letter-spacing:0.527px;">hybrid_desktop_</div>
<div class="t l" style="top:722px;font-size:15px;color:#e4dee6;left:353px;letter-spacing:0.357px;">env.tsx</div>
<svg style="left:499.5px;top:639px;" width="44" height="58" viewBox="0 0 44 58"><defs><linearGradient id="g12" x1="0" y1="0" x2="0" y2="1"><stop offset="0" stop-color="#7a7a7a"/><stop offset="1" stop-color="#535353"/></linearGradient></defs><path d="M0 0H30L44 14V58H0Z" fill="url(#g12)"/><path d="M30 14L44 26.6V14Z" fill="#333" opacity="0.55"/><path d="M30 0V14H44Z" fill="#b5b5b5"/><circle cx="22" cy="29" r="8.5" fill="none" stroke="#c9c9c9" stroke-width="1.3"/><circle cx="22" cy="29" r="2.2" fill="none" stroke="#c9c9c9" stroke-width="1.2"/><path d="M17 24a7 7 0 0 1 4-2M27 34a7 7 0 0 1-4 2" stroke="#c9c9c9" stroke-width="2"/></svg>
<div class="t l" style="top:703px;font-size:15px;color:#e4dee6;left:462px;letter-spacing:0.239px;">nixos-minimal-25.</div>
<div class="t l" style="top:722px;font-size:15px;color:#e4dee6;left:467px;letter-spacing:-0.618px;">11.746.1aab892...</div>
<div class="t l" style="top:741px;font-size:15px;color:#e4dee6;left:500px;letter-spacing:0.373px;">ux.iso</div>
<svg style="left:204px;top:844px;" width="58" height="44" viewBox="0 0 58 44"><defs><linearGradient id="g13" x1="0" y1="0" x2="0" y2="1"><stop offset="0" stop-color="#46a8ea"/><stop offset="1" stop-color="#2590dd"/></linearGradient></defs><rect width="58" height="44" fill="url(#g13)"/><rect x="3" y="3.5" width="4" height="3.6" fill="#e6f3fc"/><rect x="51" y="3.5" width="4" height="3.6" fill="#e6f3fc"/><rect x="3" y="9.4" width="4" height="3.6" fill="#e6f3fc"/><rect x="51" y="9.4" width="4" height="3.6" fill="#e6f3fc"/><rect x="3" y="15.3" width="4" height="3.6" fill="#e6f3fc"/><rect x="51" y="15.3" width="4" height="3.6" fill="#e6f3fc"/><rect x="3" y="21.2" width="4" height="3.6" fill="#e6f3fc"/><rect x="51" y="21.2" width="4" height="3.6" fill="#e6f3fc"/><rect x="3" y="27.1" width="4" height="3.6" fill="#e6f3fc"/><rect x="51" y="27.1" width="4" height="3.6" fill="#e6f3fc"/><rect x="3" y="33.0" width="4" height="3.6" fill="#e6f3fc"/><rect x="51" y="33.0" width="4" height="3.6" fill="#e6f3fc"/><rect x="3" y="38.9" width="4" height="3.6" fill="#e6f3fc"/><rect x="51" y="38.9" width="4" height="3.6" fill="#e6f3fc"/><circle cx="29.0" cy="22.0" r="10.5" fill="none" stroke="#cfe8fa" stroke-width="1.2"/><path d="M25.0 16.0L35.0 22.0L25.0 28.0Z" fill="#cfe8fa"/></svg>
<div class="t l" style="top:894px;font-size:15px;color:#e4dee6;left:179px;letter-spacing:0.067px;">Video_2025-12-</div>
<div class="t l" style="top:913px;font-size:15px;color:#e4dee6;left:175px;letter-spacing:-0.191px;">03_17-37-58.mp4</div>
<svg style="left:348px;top:844px;" width="58" height="44" viewBox="0 0 58 44"><defs><linearGradient id="g14" x1="0" y1="0" x2="0" y2="1"><stop offset="0" stop-color="#46a8ea"/><stop offset="1" stop-color="#2590dd"/></linearGradient></defs><rect width="58" height="44" fill="url(#g14)"/><rect x="3" y="3.5" width="4" height="3.6" fill="#e6f3fc"/><rect x="51" y="3.5" width="4" height="3.6" fill="#e6f3fc"/><rect x="3" y="9.4" width="4" height="3.6" fill="#e6f3fc"/><rect x="51" y="9.4" width="4" height="3.6" fill="#e6f3fc"/><rect x="3" y="15.3" width="4" height="3.6" fill="#e6f3fc"/><rect x="51" y="15.3" width="4" height="3.6" fill="#e6f3fc"/><rect x="3" y="21.2" width="4" height="3.6" fill="#e6f3fc"/><rect x="51" y="21.2" width="4" height="3.6" fill="#e6f3fc"/><rect x="3" y="27.1" width="4" height="3.6" fill="#e6f3fc"/><rect x="51" y="27.1" width="4" height="3.6" fill="#e6f3fc"/><rect x="3" y="33.0" width="4" height="3.6" fill="#e6f3fc"/><rect x="51" y="33.0" width="4" height="3.6" fill="#e6f3fc"/><rect x="3" y="38.9" width="4" height="3.6" fill="#e6f3fc"/><rect x="51" y="38.9" width="4" height="3.6" fill="#e6f3fc"/><circle cx="29.0" cy="22.0" r="10.5" fill="none" stroke="#cfe8fa" stroke-width="1.2"/><path d="M25.0 16.0L35.0 22.0L25.0 28.0Z" fill="#cfe8fa"/></svg>
<div class="t l" style="top:894px;font-size:15px;color:#e4dee6;left:323px;letter-spacing:0.067px;">Video_2025-12-</div>
<div class="t l" style="top:913px;font-size:15px;color:#e4dee6;left:317px;letter-spacing:0.081px;">02_20-21-39.mp4</div>
<svg style="left:499.5px;top:830px;" width="44" height="58" viewBox="0 0 44 58"><defs><linearGradient id="g15" x1="0" y1="0" x2="0" y2="1"><stop offset="0" stop-color="#f6dc7c"/><stop offset="1" stop-color="#efc94a"/></linearGradient></defs><path d="M0 0H30L44 14V58H0Z" fill="url(#g15)"/><path d="M30 14L44 26.6V14Z" fill="#b89a2a" opacity="0.55"/><path d="M30 0V14H44Z" fill="#fbedb8"/><text x="22" y="39" font-size="20" text-anchor="middle" fill="#fff7d8" font-family="Liberation Sans">{ }</text></svg>
<div class="t l" style="top:894px;font-size:15px;color:#e4dee6;left:464px;letter-spacing:0.523px;">midnight.theme.</div>
<div class="t l" style="top:913px;font-size:15px;color:#e4dee6;left:510px;letter-spacing:0.425px;">css</div>
<svg style="left:641px;top:838px;" width="50" height="50" viewBox="0 0 50 50"><defs><linearGradient id="g16" x1="0" y1="0" x2="0" y2="1"><stop offset="0" stop-color="#f0b452"/><stop offset="1" stop-color="#e8a136"/></linearGradient></defs><rect width="50" height="50" fill="url(#g16)"/><rect x="23.0" y="1.0" width="2" height="1.6" fill="#6a4a1a" opacity="0.9"/><rect x="25.0" y="3.5" width="2" height="1.6" fill="#6a4a1a" opacity="0.9"/><rect x="23.0" y="6.0" width="2" height="1.6" fill="#6a4a1a" opacity="0.9"/><rect x="25.0" y="8.5" width="2" height="1.6" fill="#6a4a1a" opacity="0.9"/><rect x="23.0" y="11.0" width="2" height="1.6" fill="#6a4a1a" opacity="0.9"/><rect x="25.0" y="13.5" width="2" height="1.6" fill="#6a4a1a" opacity="0.9"/><rect x="23.0" y="16.0" width="2" height="1.6" fill="#6a4a1a" opacity="0.9"/><rect x="23.0" y="18.5" width="4" height="5" rx="1" fill="none" stroke="#6a4a1a" stroke-width="1"/><path d="M25.0 23.5v3" stroke="#6a4a1a" stroke-width="1"/></svg>
<div class="t l" style="top:894px;font-size:15px;color:#e4dee6;left:614px;letter-spacing:-0.187px;">discord-0.0.117.</div>
<div class="t l" style="top:913px;font-size:15px;color:#e4dee6;left:646px;letter-spacing:0.753px;">tar.gz</div>
<svg style="left:208px;top:1009px;" width="50" height="50" viewBox="0 0 50 50"><defs><linearGradient id="g17" x1="0" y1="0" x2="0" y2="1"><stop offset="0" stop-color="#f6d877"/><stop offset="1" stop-color="#f0c94e"/></linearGradient></defs><rect width="50" height="50" fill="url(#g17)"/><rect x="23.0" y="1.0" width="2" height="1.6" fill="#fff" opacity="0.9"/><rect x="25.0" y="3.5" width="2" height="1.6" fill="#fff" opacity="0.9"/><rect x="23.0" y="6.0" width="2" height="1.6" fill="#fff" opacity="0.9"/><rect x="25.0" y="8.5" width="2" height="1.6" fill="#fff" opacity="0.9"/><rect x="23.0" y="11.0" width="2" height="1.6" fill="#fff" opacity="0.9"/><rect x="25.0" y="13.5" width="2" height="1.6" fill="#fff" opacity="0.9"/><rect x="23.0" y="16.0" width="2" height="1.6" fill="#fff" opacity="0.9"/><rect x="23.0" y="18.5" width="4" height="5" rx="1" fill="none" stroke="#fff" stroke-width="1"/><path d="M25.0 23.5v3" stroke="#fff" stroke-width="1"/></svg>
<svg style="left:352px;top:1009px;" width="50" height="50" viewBox="0 0 50 50"><defs><linearGradient id="g18" x1="0" y1="0" x2="0" y2="1"><stop offset="0" stop-color="#a6d82e"/><stop offset="1" stop-color="#93c722"/></linearGradient></defs><rect width="50" height="50" fill="url(#g18)"/><rect x="23.0" y="1.0" width="2" height="1.6" fill="#fff" opacity="0.9"/><rect x="25.0" y="3.5" width="2" height="1.6" fill="#fff" opacity="0.9"/><rect x="23.0" y="6.0" width="2" height="1.6" fill="#fff" opacity="0.9"/><rect x="25.0" y="8.5" width="2" height="1.6" fill="#fff" opacity="0.9"/><rect x="23.0" y="11.0" width="2" height="1.6" fill="#fff" opacity="0.9"/><rect x="25.0" y="13.5" width="2" height="1.6" fill="#fff" opacity="0.9"/><rect x="23.0" y="16.0" width="2" height="1.6" fill="#fff" opacity="0.9"/><rect x="23.0" y="18.5" width="4" height="5" rx="1" fill="none" stroke="#fff" stroke-width="1"/><path d="M25.0 23.5v3" stroke="#fff" stroke-width="1"/></svg>
<svg style="left:493px;top:1016px;" width="58" height="44" viewBox="0 0 58 44"><defs><linearGradient id="g19" x1="0" y1="0" x2="0" y2="1"><stop offset="0" stop-color="#46a8ea"/><stop offset="1" stop-color="#2590dd"/></linearGradient></defs><rect width="58" height="44" fill="url(#g19)"/><rect x="3" y="3.5" width="4" height="3.6" fill="#e6f3fc"/><rect x="51" y="3.5" width="4" height="3.6" fill="#e6f3fc"/><rect x="3" y="9.4" width="4" height="3.6" fill="#e6f3fc"/><rect x="51" y="9.4" width="4" height="3.6" fill="#e6f3fc"/><rect x="3" y="15.3" width="4" height="3.6" fill="#e6f3fc"/><rect x="51" y="15.3" width="4" height="3.6" fill="#e6f3fc"/><rect x="3" y="21.2" width="4" height="3.6" fill="#e6f3fc"/><rect x="51" y="21.2" width="4" height="3.6" fill="#e6f3fc"/><rect x="3" y="27.1" width="4" height="3.6" fill="#e6f3fc"/><rect x="51" y="27.1" width="4" height="3.6" fill="#e6f3fc"/><rect x="3" y="33.0" width="4" height="3.6" fill="#e6f3fc"/><rect x="51" y="33.0" width="4" height="3.6" fill="#e6f3fc"/><rect x="3" y="38.9" width="4" height="3.6" fill="#e6f3fc"/><rect x="51" y="38.9" width="4" height="3.6" fill="#e6f3fc"/><circle cx="29.0" cy="22.0" r="10.5" fill="none" stroke="#cfe8fa" stroke-width="1.2"/><path d="M25.0 16.0L35.0 22.0L25.0 28.0Z" fill="#cfe8fa"/></svg>
<svg style="left:644px;top:1001px;" width="44" height="58" viewBox="0 0 44 58"><defs><linearGradient id="g20" x1="0" y1="0" x2="0" y2="1"><stop offset="0" stop-color="#e2e6e9"/><stop offset="1" stop-color="#c9ced2"/></linearGradient></defs><path d="M0 0H30L44 14V58H0Z" fill="url(#g20)"/><path d="M30 14L44 26.6V14Z" fill="#8a9298" opacity="0.55"/><path d="M30 0V14H44Z" fill="#f2f4f5"/><text x="21.5" y="35" font-size="20" text-anchor="middle" fill="#7f8b93" font-family="Liberation Sans">[T]</text></svg>
<div style="left:150px;top:1041px;width:616px;height:30px;background:#201f23;"></div>
<svg style="left:790px;top:121px;" width="146" height="132" viewBox="0 0 146 132"><path d="M3 1H63L72 11H143V60H3Z" fill="#8a7ba8"/><path d="M1 36H48L58 26H145V131H1Z" fill="#c9b4f2"/><circle cx="38.5" cy="56" r="13.5" fill="#5e5e5e"/><circle cx="38.5" cy="56" r="7.5" fill="#c9b4f2"/><path d="M27 62c4-2 8-9 13-12s9-1 10 1" stroke="#8a8a8a" stroke-width="5" fill="none"/><path d="M30 52a9 9 0 0 1 14-5" stroke="#444" stroke-width="2" fill="none"/><path d="M90 38h30l-3.5 35h-23z" fill="#d6e2ee" stroke="#9aa8b8" stroke-width="1"/><ellipse cx="105" cy="38" rx="15" ry="3.2" fill="#a9c4e0" stroke="#8a9aaa" stroke-width="0.8"/><circle cx="104" cy="54" r="6" fill="none" stroke="#2f6fd8" stroke-width="3" stroke-dasharray="5 2.5"/><ellipse cx="105" cy="72" rx="11.5" ry="3" fill="#bdbdbd"/><g transform="rotate(-8 40 100)"><rect x="7" y="81" width="66" height="38" fill="#fff"/><g transform="translate(9 83) scale(0.602 0.586)"><rect width="103" height="58" fill="#3b3937"/><path d="M0 0H103V18H0Z" fill="#2e2c2b"/><path d="M30 0L45 14M50 0L57 14M72 0L68 14" stroke="#1b1a1a" stroke-width="2"/><path d="M0 18H103V34H0Z" fill="#4c4946"/><circle cx="21" cy="5" r="2.5" fill="#cfcac4"/><circle cx="52" cy="7" r="2" fill="#8a8580"/><path d="M17 13H33V32H17Z" fill="#5b6068"/><path d="M3 25H17V31H3Z" fill="#8a3820"/><circle cx="14" cy="16" r="2.5" fill="#b02a2a"/><path d="M23 10l6 2v2l-6-2z" fill="#b03030"/><path d="M0 34H103V58H0Z" fill="#2a2826"/><path d="M33 17c3-1 6 0 7 3l1 8-2 12h-4l-1-10-3-4z" fill="#b13a36"/><path d="M36 24h4v16h-3z" fill="#d8c8c0"/><path d="M49 18h8v7h-8z" fill="#d43a3a"/><path d="M56 20c3 0 5 3 5 6l-1 10-4 2z" fill="#c9b8b0"/><path d="M62 33l35-4 6 10v19H58l4-12z" fill="#121212"/><path d="M57 42h6v3h-6z" fill="#7ad02a"/><path d="M0 52h20v6H0z" fill="#b03030"/><path d="M12 51h5M14.5 48.5v5" stroke="#eee" stroke-width="2"/><circle cx="46" cy="51" r="4" fill="#e8e0d8"/><circle cx="46" cy="51" r="2.6" fill="#4a78b0"/><path d="M33 53h13v5H33z" fill="#4a78b0"/><circle cx="59" cy="51" r="4" fill="#e8e0d8"/><circle cx="59" cy="51" r="2.6" fill="#c03838"/><path d="M59 53h12v5H59z" fill="#b03030"/><path d="M85 52h18v6H85z" fill="#b83434"/><path d="M76 3h26v3H76z" fill="#9a9288"/></g></g><g transform="rotate(6 107 100)"><rect x="87" y="79" width="40" height="42" fill="#fff"/><rect x="89" y="81" width="36" height="38" fill="#e7d8c4"/><path d="M103 82l5 6c4-3 10-3 15 0l2-5v36h-17c-4-6-6-14-5-22z" fill="#22474a"/><ellipse cx="114" cy="96" rx="7" ry="4" fill="#efe6d4"/><circle cx="114" cy="96" r="3.2" fill="#a85a32"/></g></svg>
<div class="t l" style="top:288px;font-size:15px;color:#ece6ee;font-weight:700;left:824px;letter-spacing:-0.294px;">Downloads</div>
<div style="left:783px;top:318px;width:160px;height:1px;background:#35333a;"></div>
<div class="t l" style="top:329px;font-size:12px;color:#e4dee6;left:812px;letter-spacing:0.273px;">Type:</div>
<div class="t l" style="top:329px;font-size:12px;color:#e4dee6;left:851px;letter-spacing:0.165px;">Folder</div>
<div style="left:812.1px;top:341px;width:6px;height:1px;background:#e4dee6;"></div>
<div class="t l" style="top:347px;font-size:12px;color:#e4dee6;left:816px;letter-spacing:-0.084px;">Size:</div>
<div class="t l" style="top:347px;font-size:12px;color:#e4dee6;left:851px;letter-spacing:0.327px;">49 items</div>
<div style="left:816.2px;top:358.9px;width:6px;height:1px;background:#e4dee6;"></div>
<div class="t l" style="top:365px;font-size:12px;color:#e4dee6;left:788px;letter-spacing:0.731px;">Modified:</div>
<div class="t l" style="top:365px;font-size:12px;color:#e4dee6;left:851px;letter-spacing:0.441px;">Just now</div>
<div style="left:788.0px;top:376.8px;width:11px;height:1px;background:#e4dee6;"></div>
<div class="t l" style="top:383px;font-size:12px;color:#e4dee6;left:784px;letter-spacing:0.285px;">Accessed:</div>
<div class="t l" style="top:383px;font-size:12px;color:#e4dee6;left:851px;letter-spacing:0.441px;">Just now</div>
<div style="left:784.9000000000001px;top:394.8px;width:8px;height:1px;background:#e4dee6;"></div>
<div class="t l" style="top:401px;font-size:12px;color:#e4dee6;left:793px;letter-spacing:0.488px;">Created:</div>
<div class="t l" style="top:401px;font-size:12px;color:#e4dee6;left:851px;letter-spacing:0.033px;">Sunday,</div>
<div style="left:793.1px;top:413.2px;width:9px;height:1px;background:#e4dee6;"></div>
<div class="t l" style="top:416px;font-size:12px;color:#e4dee6;left:851px;letter-spacing:0.179px;">November 23,</div>
<div class="t l" style="top:431px;font-size:12px;color:#e4dee6;left:851px;letter-spacing:-0.467px;">2025 at 11:19 PM</div>
<div class="t l" style="top:1049px;font-size:15px;color:#e4dee6;left:154px;letter-spacing:-0.026px;">1 folder, 48 files (4.9 GiB)</div>
<div style="left:573px;top:1057px;width:85px;height:2px;background:#3d3a42;border-radius:1px;"></div>
<div style="left:573px;top:1056.5px;width:42px;height:3px;background:#5b4a78;border-radius:1.5px;"></div>
<div class="t l" style="top:1050px;font-size:14px;color:#e4dee6;left:678px;letter-spacing:-0.638px;">241.3 GiB free</div>
<div class="w" style="left:0;top:0;width:1918px;height:1077px;clip-path:inset(44px 5px 3px 964px round 16px);">
<div style="left:964px;top:44px;width:949px;height:1030px;background:#efefef;border-radius:16px;"></div>
<div style="left:964px;top:66px;width:949px;height:1px;background:#d6d6d6;"></div>
<div style="left:1132px;top:45px;width:54px;height:21px;background:#308cc6;"></div>
<div class="t" style="top:50px;font-size:12px;color:#0e0e0e;left:974px;letter-spacing:-0.099px;">File</div>
<div style="left:974.3px;top:62px;width:5.5px;height:1px;background:#0e0e0e;"></div>
<div class="t" style="top:50px;font-size:12px;color:#0e0e0e;left:1008px;letter-spacing:0.321px;">Edit</div>
<div style="left:1008.8px;top:62px;width:6px;height:1px;background:#0e0e0e;"></div>
<div class="t" style="top:50px;font-size:12px;color:#0e0e0e;left:1045px;letter-spacing:0.382px;">View</div>
<div style="left:1045.8px;top:62px;width:7px;height:1px;background:#0e0e0e;"></div>
<div class="t" style="top:50px;font-size:12px;color:#0e0e0e;left:1087px;letter-spacing:0.245px;">Player</div>
<div style="left:1087px;top:62px;width:6.5px;height:1px;background:#0e0e0e;"></div>
<div class="t" style="top:50px;font-size:12px;color:#0e0e0e;left:1196px;letter-spacing:0.720px;">Help</div>
<div style="left:1196px;top:62px;width:7px;height:1px;background:#0e0e0e;"></div>
<div class="t l" style="top:50px;font-size:12px;color:#ffffff;left:1136px;letter-spacing:0.354px;">Settings</div>
<div style="left:1136.4px;top:62px;width:6.5px;height:1px;background:#fff;"></div>
<div style="left:964px;top:67px;width:949px;height:60px;background:linear-gradient(#f8f8f8,#ececec);"></div>
<div style="left:964px;top:127px;width:949px;height:1px;background:#c6c6c6;"></div>
<div class="t" style="top:106px;font-size:12px;color:#0e0e0e;left:975px;letter-spacing:0.164px;">Open File</div>
<div class="t" style="top:106px;font-size:12px;color:#0e0e0e;left:1044px;letter-spacing:0.406px;">New Generator</div>
<div class="t" style="top:106px;font-size:12px;color:#0e0e0e;left:1296px;letter-spacing:-0.202px;">Peak Meter</div>
<div class="t" style="top:106px;font-size:12px;color:#0e0e0e;left:1370px;letter-spacing:0.450px;">Properties</div>
<div class="t" style="top:106px;font-size:12px;color:#0e0e0e;left:1445px;letter-spacing:0.164px;">Recent</div>
<div class="t" style="top:106px;font-size:12px;color:#0e0e0e;left:1499px;letter-spacing:0.290px;">Playlist</div>
<div class="t" style="top:106px;font-size:12px;color:#0e0e0e;left:1555px;letter-spacing:0.534px;">Timeline</div>
<div class="t" style="top:106px;font-size:12px;color:#0e0e0e;left:1619px;letter-spacing:0.296px;">Filters</div>
<div class="t" style="top:106px;font-size:12px;color:#0e0e0e;left:1669px;letter-spacing:0.311px;">Keyframes</div>
<div class="t" style="top:106px;font-size:12px;color:#0e0e0e;left:1745px;letter-spacing:0.551px;">History</div>
<div class="t" style="top:106px;font-size:12px;color:#0e0e0e;left:1801px;letter-spacing:0.472px;">Export</div>
<div class="t" style="top:106px;font-size:12px;color:#0e0e0e;left:1853px;letter-spacing:-0.303px;">Jobs</div>
<svg style="left:1127px;top:118px;" width="5" height="5" viewBox="0 0 5 5"><path d="M0 4.5L4.5 0V4.5Z" fill="#777"/></svg>
<svg style="left:991px;top:79px;" width="22" height="16" viewBox="0 0 22 16"><path d="M2 7V3h6l1-1.5h3l1 1.5h6v4" stroke="#0e0e0e" stroke-width="1.8" fill="none"/><path d="M0.5 8h20.5l-1 6.5c-.2.8-.8 1.3-1.6 1.3H3.1c-.8 0-1.4-.5-1.6-1.3Z" fill="#0e0e0e"/></svg>
<svg style="left:1077px;top:78px;" width="20" height="19" viewBox="0 0 20 19"><path d="M4 0H10.5V5.5H17.5V18.5H4Z" fill="#0e0e0e"/><path d="M11.8 0.3L17.5 4.3H11.8Z" fill="#0e0e0e"/><path d="M0.5 12.5h9M5 8v9" stroke="#f2f2f2" stroke-width="5.2"/><path d="M0.8 12.5h8.4M5 8.3v8.4" stroke="#0e0e0e" stroke-width="2.6"/></svg>
<svg style="left:1314px;top:77px;" width="18" height="19" viewBox="0 0 18 19"><rect x="0" y="16" width="17" height="3" rx="1" fill="#0e0e0e"/><rect x="2.0" y="13.5" width="2.3" height="1.6" fill="#0e0e0e"/><rect x="2.0" y="10.9" width="2.3" height="1.6" fill="#0e0e0e"/><rect x="2.0" y="8.3" width="2.3" height="1.6" fill="#0e0e0e"/><rect x="2.0" y="5.7" width="2.3" height="1.6" fill="#0e0e0e"/><rect x="5.3" y="13.5" width="2.3" height="1.6" fill="#0e0e0e"/><rect x="5.3" y="10.9" width="2.3" height="1.6" fill="#0e0e0e"/><rect x="5.3" y="8.3" width="2.3" height="1.6" fill="#0e0e0e"/><rect x="5.3" y="5.7" width="2.3" height="1.6" fill="#0e0e0e"/><rect x="5.3" y="3.1" width="2.3" height="1.6" fill="#0e0e0e"/><rect x="8.6" y="13.5" width="2.3" height="1.6" fill="#0e0e0e"/><rect x="8.6" y="10.9" width="2.3" height="1.6" fill="#0e0e0e"/><rect x="8.6" y="8.3" width="2.3" height="1.6" fill="#0e0e0e"/><rect x="8.6" y="5.7" width="2.3" height="1.6" fill="#0e0e0e"/><rect x="11.9" y="13.5" width="2.3" height="1.6" fill="#0e0e0e"/><rect x="11.9" y="10.9" width="2.3" height="1.6" fill="#0e0e0e"/><rect x="11.9" y="8.3" width="2.3" height="1.6" fill="#0e0e0e"/><rect x="7" y="0" width="3" height="2" fill="#0e0e0e"/></svg>
<svg style="left:1393px;top:77px;" width="11" height="19" viewBox="0 0 11 19"><circle cx="5.5" cy="2.5" r="2.5" fill="#0e0e0e"/><path d="M1 7h6.5v9.5H10V19H1v-2.5h2V9.5H1Z" fill="#0e0e0e"/></svg>
<svg style="left:1452px;top:76px;" width="23" height="22" viewBox="0 0 23 22"><circle cx="11.5" cy="11" r="9.5" fill="none" stroke="#0e0e0e" stroke-width="2.2"/><path d="M10.5 5v7h5" stroke="#0e0e0e" stroke-width="2" fill="none"/></svg>
<svg style="left:1509px;top:79px;" width="20" height="16" viewBox="0 0 20 16"><rect x="0" y="0" width="3.5" height="3.5" fill="#0e0e0e"/><rect x="6" y="0" width="13.5" height="3.5" fill="#0e0e0e"/><rect x="0" y="6" width="3.5" height="3.5" fill="#0e0e0e"/><rect x="6" y="6" width="13.5" height="3.5" fill="#0e0e0e"/><rect x="0" y="12" width="3.5" height="3.5" fill="#0e0e0e"/><rect x="6" y="12" width="13.5" height="3.5" fill="#0e0e0e"/></svg>
<svg style="left:1567px;top:77px;" width="23" height="19" viewBox="0 0 23 19"><rect x="1" y="0" width="2" height="19" fill="#0e0e0e"/><rect x="4" y="3" width="7" height="3" fill="#0e0e0e"/><rect x="13" y="3" width="10" height="3" fill="#0e0e0e"/><rect x="4" y="8" width="11" height="3" fill="#0e0e0e"/><rect x="17" y="8" width="6" height="3" fill="#0e0e0e"/><rect x="4" y="13" width="19" height="3" fill="#0e0e0e"/></svg>
<svg style="left:1626px;top:77px;" width="19" height="19" viewBox="0 0 19 19"><path d="M0.5 1h18L12 9v10l-4-2.5V9Z" fill="#0e0e0e"/></svg>
<svg style="left:1689px;top:76px;" width="20" height="22" viewBox="0 0 20 22"><circle cx="10" cy="12.5" r="8.2" fill="none" stroke="#0e0e0e" stroke-width="2"/><path d="M6.5 1.2h7M10 1v3.2M17 4l1.5 1.5" stroke="#0e0e0e" stroke-width="2"/><path d="M10 6.5v6" stroke="#0e0e0e" stroke-width="2.4"/><path d="M7.5 11.5h5L10 15.5Z" fill="#0e0e0e"/></svg>
<svg style="left:1754px;top:79px;" width="22" height="16" viewBox="0 0 22 16"><rect x="0" y="2" width="4" height="5" fill="#0e0e0e"/><path d="M5 3.2h15v2.8H5" stroke="#0e0e0e" stroke-width="1.8" fill="none"/><path d="M8 11.5h13M12.5 7.5l-4 4 4 4" stroke="#0e0e0e" stroke-width="1.8" fill="none"/></svg>
<svg style="left:1809px;top:76px;" width="22" height="22" viewBox="0 0 22 22"><circle cx="11" cy="11" r="10.6" fill="#0e0e0e"/><circle cx="11" cy="11" r="3.2" fill="#efefef"/><circle cx="11" cy="11" r="1.6" fill="#0e0e0e"/></svg>
<svg style="left:1855px;top:76px;" width="22" height="22" viewBox="0 0 22 22"><g transform="translate(11 11)"><circle r="7.3" fill="#0e0e0e"/><rect x="-2.3" y="-11" width="4.6" height="5" fill="#0e0e0e" transform="rotate(0)"/><rect x="-2.3" y="-11" width="4.6" height="5" fill="#0e0e0e" transform="rotate(45)"/><rect x="-2.3" y="-11" width="4.6" height="5" fill="#0e0e0e" transform="rotate(90)"/><rect x="-2.3" y="-11" width="4.6" height="5" fill="#0e0e0e" transform="rotate(135)"/><rect x="-2.3" y="-11" width="4.6" height="5" fill="#0e0e0e" transform="rotate(180)"/><rect x="-2.3" y="-11" width="4.6" height="5" fill="#0e0e0e" transform="rotate(225)"/><rect x="-2.3" y="-11" width="4.6" height="5" fill="#0e0e0e" transform="rotate(270)"/><rect x="-2.3" y="-11" width="4.6" height="5" fill="#0e0e0e" transform="rotate(315)"/><circle r="3" fill="#efefef"/></g></svg>
<div class="t" style="top:91px;font-size:12px;color:#444;left:1900px;letter-spacing:0.848px;">››</div>
<div class="t" style="top:133px;font-size:12px;color:#0e0e0e;left:968px;letter-spacing:0.529px;">Filters</div>
<div style="left:974px;top:181px;width:351px;height:136px;background:#fff;"></div>
<div style="left:1324px;top:191px;width:30px;height:126px;background:#fff;"></div>
<div style="left:974.5px;top:322px;width:23px;height:23px;background:linear-gradient(#f6f6f6,#e8e8e8);border:1px solid #cdcdcd;border-radius:2px;"></div>
<div style="left:1003.5px;top:322px;width:23px;height:23px;background:linear-gradient(#f6f6f6,#e8e8e8);border:1px solid #cdcdcd;border-radius:2px;"></div>
<div style="left:1038.5px;top:322px;width:23px;height:23px;background:linear-gradient(#f6f6f6,#e8e8e8);border:1px solid #cdcdcd;border-radius:2px;"></div>
<div style="left:1067.5px;top:322px;width:23px;height:23px;background:linear-gradient(#f6f6f6,#e8e8e8);border:1px solid #cdcdcd;border-radius:2px;"></div>
<div style="left:1096.5px;top:322px;width:23px;height:23px;background:linear-gradient(#f6f6f6,#e8e8e8);border:1px solid #cdcdcd;border-radius:2px;"></div>
<div style="left:1032px;top:325px;width:1px;height:18px;background:#d2d2d2;"></div>
<div style="left:1125px;top:325px;width:1px;height:18px;background:#d2d2d2;"></div>
<svg style="left:980px;top:328px;" width="12" height="12" viewBox="0 0 12 12"><path d="M6 0.5v11M0.5 6h11" stroke="#707070" stroke-width="3"/></svg>
<svg style="left:1009px;top:332px;" width="12" height="4" viewBox="0 0 12 4"><rect width="12" height="3.2" fill="#707070"/></svg>
<svg style="left:1044px;top:326px;" width="13" height="14" viewBox="0 0 13 14"><path d="M0 3h5v11H0Z M6 0h4l3 3v9H6Z" fill="#707070"/></svg>
<svg style="left:1073px;top:326px;" width="12" height="14" viewBox="0 0 12 14"><rect x="0.8" y="2" width="10.4" height="11.5" rx="1" fill="none" stroke="#707070" stroke-width="1.5"/><rect x="2.5" y="4" width="7" height="8" fill="#707070"/><rect x="4" y="0.5" width="4" height="2.5" fill="#707070"/></svg>
<svg style="left:1102px;top:326px;" width="13" height="14" viewBox="0 0 13 14"><ellipse cx="6.5" cy="2.5" rx="6" ry="2.3" fill="#707070"/><path d="M0.5 5.5c0 3 12 3 12 0v2.5c0 3-12 3-12 0zM0.5 9.5c0 3 12 3 12 0v2c0 3-12 3-12 0z" fill="#707070"/></svg>
<div style="left:1334px;top:204px;width:204px;height:538px;border:2.5px solid #308cc6;"></div>
<div style="left:1334px;top:204px;width:204px;height:26.5px;background:#308cc6;"></div>
<div class="t l" style="top:214px;font-size:12px;color:#fff;font-weight:700;left:1400px;letter-spacing:0.375px;">New Project</div>
<div style="left:1336.5px;top:230.5px;width:17.5px;height:86px;background:#fff;"></div>
<div class="t" style="top:247px;font-size:12px;color:#1a1a1a;left:1346px;letter-spacing:0.296px;">Projects folder</div>
<div style="left:1433px;top:240px;width:94px;height:25px;background:linear-gradient(#fafafa,#ececec);border:1px solid #c4c4c4;border-radius:3px;"></div>
<div class="t" style="top:247px;font-size:12px;color:#1a1a1a;left:1437px;letter-spacing:0.301px;">...e/alex/Videos</div>
<div class="t" style="top:277px;font-size:12px;color:#1a1a1a;left:1352px;letter-spacing:0.331px;">Project name</div>
<div style="left:1433px;top:271px;width:94px;height:25px;background:#fff;border:1px solid #c4c4c4;border-radius:3px;"></div>
<div class="t" style="top:309px;font-size:12px;color:#1a1a1a;left:1359px;letter-spacing:0.390px;">Video mode</div>
<div style="left:1433px;top:302.5px;width:94px;height:24.5px;background:linear-gradient(#fafafa,#ececec);border:1px solid #c4c4c4;border-radius:3px;"></div>
<div class="t" style="top:309px;font-size:12px;color:#1a1a1a;left:1450px;letter-spacing:0.686px;">Automatic</div>
<div class="t" style="top:336px;font-size:12px;color:#1a1a1a;left:1433px;letter-spacing:0.561px;">Automatic</div>
<div class="t" style="top:353px;font-size:12px;color:#1a1a1a;left:1433px;letter-spacing:0.351px;">means the</div>
<div class="t" style="top:370px;font-size:12px;color:#1a1a1a;left:1433px;letter-spacing:0.590px;">resolution</div>
<div class="t" style="top:387px;font-size:12px;color:#1a1a1a;left:1433px;letter-spacing:0.476px;">and frame</div>
<div class="t" style="top:404px;font-size:12px;color:#1a1a1a;left:1433px;letter-spacing:0.355px;">rate are</div>
<div class="t" style="top:421px;font-size:12px;color:#1a1a1a;left:1433px;letter-spacing:0.313px;">based on the</div>
<div style="left:1513px;top:333px;width:14px;height:102px;background:#fafafa;border:1px solid #c8c8c8;"></div>
<div style="left:1514px;top:347px;width:12px;height:37px;background:#fff;border-bottom:1px solid #ddd;"></div>
<div style="left:1514px;top:384px;width:12px;height:36px;background:#dedede;"></div>
<svg style="left:1516px;top:336px;" width="8" height="6" viewBox="0 0 8 6"><path d="M0.5 5.5L4 1 7.5 5.5Z" fill="#444"/></svg>
<svg style="left:1516px;top:425px;" width="8" height="6" viewBox="0 0 8 6"><path d="M0.5 0.5L4 5 7.5 0.5Z" fill="#444"/></svg>
<div style="left:1436px;top:441.5px;width:77px;height:24px;background:#ececec;border:1px solid #d0d0d0;border-radius:3px;"></div>
<div class="t l" style="top:447px;font-size:12px;color:#a6a6a6;left:1458px;letter-spacing:0.625px;">Start</div>
<div style="left:1544px;top:204px;width:123px;height:538px;background:#fff;border:2.5px solid #308cc6;"></div>
<div style="left:1544px;top:204px;width:123px;height:26.5px;background:#308cc6;"></div>
<div class="t l" style="top:214px;font-size:12px;color:#fff;font-weight:700;left:1581px;letter-spacing:0.212px;">Projects</div>
<div class="t" style="top:235px;font-size:12px;color:#1a1a1a;left:1551px;letter-spacing:0.202px;">asdasd.mlt</div>
<div style="left:1548px;top:254px;width:115px;height:17px;background:#f3f3f3;"></div>
<div class="t" style="top:257px;font-size:12px;color:#1a1a1a;left:1551px;letter-spacing:0.738px;">test.mlt</div>
<div class="t" style="top:133px;font-size:12px;color:#1a1a1a;left:1688px;letter-spacing:0.790px;">Au...</div>
<div style="left:1719px;top:133.4px;width:10px;height:9.5px;border:1px solid #aaa;background:#e6e6e6;"></div>
<div style="left:1722px;top:135.4px;width:4px;height:4px;border:1px solid #999;"></div>
<svg style="left:1737.8px;top:133.4px;" width="10.5" height="10" viewBox="0 0 10.5 10"><rect x="0.5" y="0.5" width="9.5" height="9" fill="#e6e6e6" stroke="#aaa"/><path d="M2.5 2.5l5.5 5M8 2.5l-5.5 5" stroke="#777" stroke-width="1.1"/></svg>
<div class="t" style="top:158px;font-size:10.5px;color:#222;left:1699px;">0</div>
<div class="t" style="top:211px;font-size:10.5px;color:#222;left:1696px;">-5</div>
<div class="t" style="top:271px;font-size:10.5px;color:#222;left:1690px;">-10</div>
<div class="t" style="top:332px;font-size:10.5px;color:#222;left:1690px;">-15</div>
<div class="t" style="top:392px;font-size:10.5px;color:#222;left:1690px;">-20</div>
<div class="t" style="top:440px;font-size:10.5px;color:#222;left:1690px;">-25</div>
<div class="t" style="top:489px;font-size:10.5px;color:#222;left:1690px;">-30</div>
<div class="t" style="top:525px;font-size:10.5px;color:#222;left:1690px;">-35</div>
<div class="t" style="top:561px;font-size:10.5px;color:#222;left:1690px;">-40</div>
<div class="t" style="top:598px;font-size:10.5px;color:#222;left:1690px;">-50</div>
<div class="t" style="top:643px;font-size:10.5px;color:#222;left:1710px;">L</div>
<div class="t" style="top:643px;font-size:10.5px;color:#222;left:1726px;">R</div>
<svg style="left:1680.5px;top:515px;" width="2" height="17" viewBox="0 0 2 17"><rect x="0" y="0" width="1" height="1" fill="#aaa"/><rect x="0" y="3" width="1" height="1" fill="#aaa"/><rect x="0" y="6" width="1" height="1" fill="#aaa"/><rect x="0" y="9" width="1" height="1" fill="#aaa"/><rect x="0" y="12" width="1" height="1" fill="#aaa"/><rect x="0" y="15" width="1" height="1" fill="#aaa"/></svg>
<svg style="left:1757.5px;top:515px;" width="2" height="17" viewBox="0 0 2 17"><rect x="0" y="0" width="1" height="1" fill="#aaa"/><rect x="0" y="3" width="1" height="1" fill="#aaa"/><rect x="0" y="6" width="1" height="1" fill="#aaa"/><rect x="0" y="9" width="1" height="1" fill="#aaa"/><rect x="0" y="12" width="1" height="1" fill="#aaa"/><rect x="0" y="15" width="1" height="1" fill="#aaa"/></svg>
<div class="t" style="top:133px;font-size:12px;color:#1a1a1a;left:1767px;letter-spacing:0.064px;">Recent</div>
<div style="left:1879px;top:133.4px;width:10px;height:9.5px;border:1px solid #aaa;background:#e6e6e6;"></div>
<div style="left:1882px;top:135.4px;width:4px;height:4px;border:1px solid #999;"></div>
<svg style="left:1897.8px;top:133.4px;" width="10.5" height="10" viewBox="0 0 10.5 10"><rect x="0.5" y="0.5" width="9.5" height="9" fill="#e6e6e6" stroke="#aaa"/><path d="M2.5 2.5l5.5 5M8 2.5l-5.5 5" stroke="#777" stroke-width="1.1"/></svg>
<div style="left:1763px;top:148px;width:150px;height:25px;background:#fff;border:1px solid #c8c8c8;border-radius:3px;"></div>
<div class="t l" style="top:154px;font-size:12px;color:#9a9a9a;left:1766px;letter-spacing:0.164px;">search</div>
<div style="left:1763px;top:173.5px;width:150px;height:711px;background:#fff;border:1px solid #c8c8c8;"></div>
<div class="t" style="top:179px;font-size:12px;color:#1a1a1a;left:1769px;letter-spacing:0.202px;">asdasd.mlt</div>
<div style="left:1766px;top:197px;width:145px;height:17px;background:#f3f3f3;"></div>
<div class="t" style="top:200px;font-size:12px;color:#1a1a1a;left:1769px;letter-spacing:0.738px;">test.mlt</div>
<div class="t" style="top:220px;font-size:12px;color:#1a1a1a;left:1769px;letter-spacing:-0.032px;">Video_2025-12-17_16-...</div>
<div style="left:1763px;top:885px;width:64.5px;height:27.5px;background:#f4f4f4;border:1px solid #c2c2c2;border-top:none;border-radius:0 0 3px 3px;"></div>
<div class="t" style="top:893px;font-size:12px;color:#1a1a1a;left:1776px;letter-spacing:-0.036px;">Recent</div>
<div style="left:1827.5px;top:885px;width:65px;height:25.5px;background:#dcdcdc;border:1px solid #c6c6c6;border-top:none;border-radius:0 0 3px 3px;"></div>
<div class="t" style="top:892px;font-size:12px;color:#1a1a1a;left:1840px;letter-spacing:0.667px;">History</div>
<div style="left:1892.5px;top:885px;width:20px;height:1px;background:#c6c6c6;"></div>
<div style="left:1339px;top:776px;width:323px;height:31px;background:#fff;"></div>
<svg style="left:1332.5px;top:775.5px;" width="13" height="8" viewBox="0 0 13 8"><path d="M0 0H12.5L6.25 7.5Z" fill="#111"/></svg>
<div style="left:1338.5px;top:790px;width:1.2px;height:16.5px;background:#111;"></div>
<div style="left:1329px;top:810.5px;width:177px;height:33.5px;background:linear-gradient(#f6f6f6,#eeeeee);"></div>
<div style="left:1506px;top:810.5px;width:139px;height:33.5px;background:linear-gradient(#f6f6f6,#eeeeee);"></div>
<svg style="left:1339.5px;top:821px;" width="13" height="12.5" viewBox="0 0 13 12.5"><rect x="0" y="0" width="3.2" height="12.5" fill="#1a1a1a"/><path d="M13 0V12.5L3.5 6.25Z" fill="#1a1a1a"/></svg>
<svg style="left:1371.5px;top:821px;" width="19.5" height="12.5" viewBox="0 0 19.5 12.5"><path d="M9.75 0V12.5L0 6.25ZM19.5 0V12.5L9.75 6.25Z" fill="#1a1a1a"/></svg>
<svg style="left:1410.5px;top:821px;" width="10.5" height="12.5" viewBox="0 0 10.5 12.5"><path d="M0 0V12.5L10.5 6.25Z" fill="#1a1a1a"/></svg>
<svg style="left:1441px;top:821px;" width="19.5" height="12.5" viewBox="0 0 19.5 12.5"><path d="M0 0V12.5L9.75 6.25ZM9.75 0V12.5L19.5 6.25Z" fill="#1a1a1a"/></svg>
<div class="t" style="top:821px;font-size:12px;color:#555;left:1492px;letter-spacing:0.848px;">››</div>
<svg style="left:1512px;top:817px;" width="19" height="19.5" viewBox="0 0 19 19.5"><path d="M4.5 4.5A7.5 7.5 0 1 1 2.5 12" stroke="#1a1a1a" stroke-width="2.8" fill="none"/><path d="M0.5 1.5h7v7Z" fill="#1a1a1a" transform="rotate(-10 4 5)"/></svg>
<svg style="left:1538.5px;top:825px;" width="8" height="5" viewBox="0 0 8 5"><path d="M0 0H7.5L3.75 4.5Z" fill="#555"/></svg>
<svg style="left:1582.8px;top:825px;" width="8" height="5" viewBox="0 0 8 5"><path d="M0 0H7.5L3.75 4.5Z" fill="#555"/></svg>
<svg style="left:1626.6px;top:825px;" width="8" height="5" viewBox="0 0 8 5"><path d="M0 0H7.5L3.75 4.5Z" fill="#555"/></svg>
<svg style="left:1555.5px;top:817.5px;" width="19" height="19" viewBox="0 0 19 19"><rect x="3.5" y="3.5" width="12" height="12" fill="#1a1a1a"/><path d="M0.5 3.5V0.5H3.5M15.5 0.5H18.5V3.5M18.5 15.5V18.5H15.5M3.5 18.5H0.5V15.5" stroke="#1a1a1a" stroke-width="1.2" fill="none"/></svg>
<svg style="left:1598px;top:816.5px;" width="22" height="21.5" viewBox="0 0 22 21.5"><rect x="2.0" y="0" width="2.2" height="21.5" fill="#1a1a1a"/><rect x="0" y="2.0" width="22" height="2.2" fill="#1a1a1a"/><rect x="7.2" y="0" width="2.2" height="21.5" fill="#1a1a1a"/><rect x="0" y="7.2" width="22" height="2.2" fill="#1a1a1a"/><rect x="12.4" y="0" width="2.2" height="21.5" fill="#1a1a1a"/><rect x="0" y="12.4" width="22" height="2.2" fill="#1a1a1a"/><rect x="17.6" y="0" width="2.2" height="21.5" fill="#1a1a1a"/><rect x="0" y="17.6" width="22" height="2.2" fill="#1a1a1a"/></svg>
<svg style="left:1644px;top:817px;" width="22" height="19.5" viewBox="0 0 22 19.5"><path d="M0 6.5h3.5L8.5 1.5V18L3.5 13H0Z" fill="#1a1a1a"/><path d="M11.5 6.5a4 4 0 0 1 0 6.5M14 3.5a8 8 0 0 1 0 12.5M16.8 1a11.5 11.5 0 0 1 0 17.5" stroke="#1a1a1a" stroke-width="2" fill="none"/></svg>
<div style="left:1325px;top:848px;width:173px;height:32px;background:linear-gradient(90deg,#f2f2f2,#f7f7f7 40%,#efefef);"></div>
<div style="left:1538px;top:848px;width:125px;height:32px;background:linear-gradient(90deg,#f7f7f7,#f4f4f4 60%,#efefef);"></div>
<div style="left:1326px;top:851.5px;width:108.5px;height:25px;background:#ececec;border:1px solid #bcbcbc;border-radius:3px;"></div>
<div style="left:1420.5px;top:852.5px;width:1px;height:23px;background:#cfcfcf;"></div>
<svg style="left:1423px;top:855px;" width="9" height="18" viewBox="0 0 9 18"><path d="M1 5.5L4.5 1.5 8 5.5Z M1 12.5L4.5 16.5 8 12.5Z" fill="#c8c8c8"/></svg>
<div class="t l" style="top:860px;font-size:11.5px;color:#b2b2b2;font-family:'Liberation Mono';left:1331px;letter-spacing:0.327px;">00:00:00.000</div>
<div class="t" style="top:859px;font-size:12px;color:#1a1a1a;left:1441px;">/</div>
<div class="t" style="top:858px;font-size:12px;color:#1a1a1a;left:1452px;letter-spacing:-0.102px;">--:--:--.---</div>
<div class="t" style="top:858px;font-size:12px;color:#1a1a1a;left:1568px;">--:--:--.---  /</div>
<div class="t" style="top:856px;font-size:12px;color:#555;left:1666px;letter-spacing:0.848px;">››</div>
<div style="left:964px;top:885.5px;width:6px;height:1px;background:#c6c6c6;"></div>
<div style="left:965px;top:885.5px;width:65px;height:25px;background:#dcdcdc;border:1px solid #c6c6c6;border-top:none;border-radius:0 0 3px 3px;"></div>
<div class="t" style="top:893px;font-size:12px;color:#1a1a1a;left:977px;letter-spacing:0.219px;">Playlist</div>
<div style="left:1030px;top:885.5px;width:58.5px;height:27px;background:#f4f4f4;border:1px solid #c2c2c2;border-top:none;border-radius:0 0 3px 3px;"></div>
<div class="t" style="top:895px;font-size:12px;color:#1a1a1a;left:1041px;letter-spacing:0.446px;">Filters</div>
<div style="left:1088.5px;top:885.5px;width:82px;height:25px;background:#dcdcdc;border:1px solid #c6c6c6;border-top:none;border-radius:0 0 3px 3px;"></div>
<div class="t" style="top:893px;font-size:12px;color:#1a1a1a;left:1100px;letter-spacing:0.517px;">Properties</div>
<div style="left:1170.5px;top:885.5px;width:145px;height:1px;background:#c6c6c6;"></div>
<div style="left:1300px;top:886px;width:16px;height:1px;background:#c6c6c6;"></div>
<div style="left:1325px;top:886px;width:63.5px;height:24.5px;background:#dcdcdc;border:1px solid #c6c6c6;border-top:none;border-radius:0 0 3px 3px;"></div>
<div class="t l" style="top:893px;font-size:12px;color:#a8a8a8;left:1337px;letter-spacing:0.064px;">Source</div>
<div style="left:1388.5px;top:886px;width:64px;height:26.5px;background:#f4f4f4;border:1px solid #c2c2c2;border-top:none;border-radius:0 0 3px 3px;"></div>
<div class="t" style="top:895px;font-size:12px;color:#1a1a1a;left:1401px;letter-spacing:0.415px;">Project</div>
<svg style="left:1432px;top:917px;" width="16" height="2" viewBox="0 0 16 2"><rect x="0" y="0" width="1" height="1" fill="#aaa"/><rect x="3" y="0" width="1" height="1" fill="#aaa"/><rect x="6" y="0" width="1" height="1" fill="#aaa"/><rect x="9" y="0" width="1" height="1" fill="#aaa"/><rect x="12" y="0" width="1" height="1" fill="#aaa"/><rect x="15" y="0" width="1" height="1" fill="#aaa"/></svg>
<div class="t" style="top:927px;font-size:12px;color:#1a1a1a;left:968px;letter-spacing:0.420px;">Timeline</div>
<div style="left:1879px;top:928.5px;width:10px;height:9.5px;border:1px solid #aaa;background:#e6e6e6;"></div>
<div style="left:1882px;top:930.5px;width:4px;height:4px;border:1px solid #999;"></div>
<svg style="left:1897.8px;top:928.5px;" width="10.5" height="10" viewBox="0 0 10.5 10"><rect x="0.5" y="0.5" width="9.5" height="9" fill="#e6e6e6" stroke="#aaa"/><path d="M2.5 2.5l5.5 5M8 2.5l-5.5 5" stroke="#777" stroke-width="1.1"/></svg>
<div style="left:964px;top:942.5px;width:949px;height:33px;background:linear-gradient(#f6f6f6,#ececec);"></div>
<div style="left:964px;top:975px;width:949px;height:1px;background:#c6c6c6;"></div>
<svg style="left:974px;top:951px;" width="13" height="17" viewBox="0 0 13 17"><rect x="0" y="0" width="12" height="2.6" fill="#111"/><rect x="0" y="6.3" width="12" height="2.6" fill="#111"/><rect x="0" y="12.5" width="12" height="2.6" fill="#111"/></svg>
<svg style="left:989px;top:968px;" width="6" height="4" viewBox="0 0 6 4"><path d="M0 0H5.5L2.75 3Z" fill="#555"/></svg>
<div style="left:1003.5px;top:950px;width:1px;height:20px;background:#d0d0d0;"></div>
<div style="left:1117.5px;top:950px;width:1px;height:20px;background:#d0d0d0;"></div>
<div style="left:1336.5px;top:950px;width:1px;height:20px;background:#d0d0d0;"></div>
<div style="left:1450px;top:950px;width:1px;height:20px;background:#d0d0d0;"></div>
<div style="left:1634.5px;top:950px;width:1px;height:20px;background:#d0d0d0;"></div>
<div style="left:1875px;top:950px;width:1px;height:20px;background:#d0d0d0;"></div>
<svg style="left:1014px;top:950px;" width="22" height="19" viewBox="0 0 22 19"><path d="M0.5 9.5C5 8 10 8.5 14 11M1 9.5c5 .5 9 .2 13-3M3 0" stroke="#6a6a6a" stroke-width="1.8" fill="none"/><circle cx="18" cy="5.5" r="2.7" fill="none" stroke="#6a6a6a" stroke-width="1.6"/><circle cx="14.5" cy="15" r="2.7" fill="none" stroke="#6a6a6a" stroke-width="1.6"/></svg>
<svg style="left:1050px;top:949px;" width="19" height="20" viewBox="0 0 19 20"><path d="M7 0H13.5L18 4.5V15H7Z" fill="#6a6a6a"/><path d="M13.8 0.3V4.2H17.7" stroke="#f3f3f3" stroke-width="1" fill="none"/><path d="M0 4.5H7L10.5 8V19.5H0Z" fill="#6a6a6a" stroke="#f3f3f3" stroke-width="1.2"/><path d="M7.2 4.8V8.2H10.4" stroke="#f3f3f3" stroke-width="1" fill="none"/></svg>
<svg style="left:1085px;top:948px;" width="20" height="21" viewBox="0 0 20 21"><rect x="1" y="3" width="17.5" height="17" rx="2.5" fill="none" stroke="#111" stroke-width="1.5"/><rect x="3" y="5" width="13.5" height="13" fill="#111"/><rect x="7" y="1" width="5.5" height="3.5" rx="1" fill="#111"/></svg>
<svg style="left:1129px;top:950px;" width="24" height="19" viewBox="0 0 24 19"><path d="M5 0H12V6H21V19H5Z" fill="#111"/><path d="M13.3 0.3L21 4.8H13.3Z" fill="#111"/><path d="M0 13h11M5.5 7.5v11" stroke="#f3f3f3" stroke-width="6.4"/><path d="M0.6 13h9.8M5.5 8.1v9.8" stroke="#111" stroke-width="3"/></svg>
<svg style="left:1151px;top:968px;" width="6" height="4" viewBox="0 0 6 4"><path d="M0 0H5.5L2.75 3Z" fill="#555"/></svg>
<svg style="left:1164.5px;top:950px;" width="19" height="19" viewBox="0 0 19 19"><path d="M9.5 0v19M0 9.5h19" stroke="#111" stroke-width="5"/></svg>
<svg style="left:1199.5px;top:957px;" width="19" height="5" viewBox="0 0 19 5"><rect width="19" height="4.5" fill="#111"/></svg>
<svg style="left:1236px;top:954px;" width="16" height="11" viewBox="0 0 16 11"><path d="M1 9.5L8 2.5 15 9.5" stroke="#111" stroke-width="2.2" fill="none"/></svg>
<svg style="left:1270.5px;top:954px;" width="16" height="11" viewBox="0 0 16 11"><path d="M1 1.5L8 8.5 15 1.5" stroke="#111" stroke-width="2.2" fill="none"/></svg>
<svg style="left:1304px;top:951px;" width="20" height="17" viewBox="0 0 20 17"><path d="M0 1.5h6.5v14H0M20 1.5h-6.5v14H20M8 1v15.5M12 1v15.5" stroke="#111" stroke-width="2.3" fill="none"/></svg>
<svg style="left:1351.5px;top:951.5px;" width="12" height="12" viewBox="0 0 12 12"><path d="M0 0H12V7.5L6 12 0 7.5Z" fill="#111"/></svg>
<svg style="left:1388px;top:951px;" width="10" height="16" viewBox="0 0 10 16"><path d="M8.5 1.5L2 8l6.5 6.5" stroke="#111" stroke-width="2" fill="none"/></svg>
<svg style="left:1422.5px;top:951px;" width="10" height="16" viewBox="0 0 10 16"><path d="M1.5 1.5L8 8l-6.5 6.5" stroke="#111" stroke-width="2" fill="none"/></svg>
<div style="left:1456px;top:944px;width:32px;height:31px;background:#5a9fd0;border:1px solid #3f84b8;border-radius:3px;"></div>
<svg style="left:1462.5px;top:948px;" width="20" height="22" viewBox="0 0 20 22"><path d="M2 21V10a8 8 0 0 1 16 0v11h-5.5V10a2.5 2.5 0 0 0-5 0v11Z" fill="#111"/><rect x="3.5" y="15.5" width="2.5" height="4" fill="#5a9fd0"/><rect x="14" y="15.5" width="2.5" height="4" fill="#5a9fd0"/></svg>
<svg style="left:1496px;top:952px;" width="22" height="14" viewBox="0 0 22 14"><path d="M1 7C6 .5 16 .5 21 7 16 13.5 6 13.5 1 7Z" stroke="#111" stroke-width="2" fill="none"/><circle cx="11" cy="7" r="3.5" fill="none" stroke="#111" stroke-width="2"/><circle cx="11" cy="7" r="1.2" fill="#111"/></svg>
<svg style="left:1531px;top:948px;" width="22" height="22" viewBox="0 0 22 22"><circle cx="11" cy="11" r="9.3" fill="none" stroke="#111" stroke-width="2.6"/><circle cx="11" cy="11" r="4.5" fill="none" stroke="#111" stroke-width="2.2"/><circle cx="11" cy="11" r="1.3" fill="#111"/></svg>
<svg style="left:1566px;top:948px;" width="22" height="22" viewBox="0 0 22 22"><circle cx="11" cy="11" r="9.3" fill="none" stroke="#111" stroke-width="2.6"/><path d="M11 5v12M5.8 8l10.4 6M5.8 14l10.4-6" stroke="#111" stroke-width="2.4"/></svg>
<svg style="left:1600px;top:947.5px;" width="23" height="23" viewBox="0 0 23 23"><circle cx="11.5" cy="11.5" r="10" fill="none" stroke="#111" stroke-width="2.6"/><path d="M5.5 6H17.5V12.5L11.5 17.5 5.5 12.5Z" fill="#111"/></svg>
<svg style="left:1645px;top:948px;" width="22" height="21" viewBox="0 0 22 21"><circle cx="7.5" cy="7.5" r="6" fill="none" stroke="#111" stroke-width="1.6"/><path d="M4.5 7.5h6" stroke="#111" stroke-width="1.6"/><path d="M12 12l8 8" stroke="#111" stroke-width="3.6" stroke-linecap="round"/></svg>
<div style="left:1676px;top:957.5px;width:120px;height:4.5px;background:#d6d6d6;border:1px solid #c6c6c6;border-radius:2px;"></div>
<div style="left:1676px;top:957.5px;width:40px;height:4.5px;background:#3f9ae0;border-radius:2px;"></div>
<div style="left:1711.5px;top:953.5px;width:13px;height:12.5px;background:linear-gradient(#fff,#e8e8e8);border:1px solid #bbb;border-radius:3px;"></div>
<svg style="left:1805.5px;top:948px;" width="22" height="21" viewBox="0 0 22 21"><circle cx="7.5" cy="7.5" r="6" fill="none" stroke="#111" stroke-width="1.6"/><path d="M4.5 7.5h6M7.5 4.5v6" stroke="#111" stroke-width="1.6"/><path d="M12 12l8 8" stroke="#111" stroke-width="3.6" stroke-linecap="round"/></svg>
<svg style="left:1843px;top:950px;" width="18" height="18" viewBox="0 0 18 18"><rect x="3.5" y="3.5" width="11" height="11" fill="#111"/><path d="M0.5 3V0.5H3M15 0.5h2.5V3M17.5 15v2.5H15M3 17.5H0.5V15" stroke="#111" stroke-width="1.2" fill="none"/></svg>
<svg style="left:1889.5px;top:948px;" width="13" height="21" viewBox="0 0 13 21"><rect x="4" y="0" width="5" height="11.5" rx="2.5" fill="#111"/><path d="M1 8.5a5.5 5.5 0 0 0 11 0M6.5 14v5.5M2 20h9" stroke="#111" stroke-width="1.8" fill="none"/></svg>
<div style="left:964px;top:1045px;width:949px;height:1px;background:#c6c6c6;"></div>
<div style="left:1746.5px;top:1004px;width:16px;height:40px;background:#f7f7f7;"></div>
<div style="left:1749px;top:1006px;width:12px;height:28.5px;background:#7d7d7d;border-radius:6px;"></div>
<div style="left:964.5px;top:1045.5px;width:84.5px;height:24px;background:#dcdcdc;border:1px solid #c6c6c6;border-top:none;border-radius:0 0 3px 3px;"></div>
<div class="t" style="top:1052px;font-size:12px;color:#1a1a1a;left:976px;letter-spacing:0.311px;">Keyframes</div>
<div style="left:1049px;top:1045.5px;width:71px;height:26px;background:#f4f4f4;border:1px solid #c2c2c2;border-top:none;border-radius:0 0 3px 3px;"></div>
<div class="t" style="top:1053px;font-size:12px;color:#1a1a1a;left:1060px;letter-spacing:0.563px;">Timeline</div>
<div style="left:1132px;top:67px;width:176px;height:461px;background:#fcfcfc;border:1px solid #9c9c9c;box-shadow:1px 1px 2px rgba(0,0,0,0.15);"></div>
<div class="t" style="top:70px;font-size:12px;color:#1a1a1a;left:1137px;letter-spacing:0.415px;">Project</div>
<div style="left:1181.5px;top:75.5px;width:121.5px;height:1px;background:#c4c4c4;"></div>
<div style="left:1140px;top:90px;width:13.5px;height:13.5px;background:#fff;border:1px solid #a8a8a8;border-radius:2px;"></div>
<svg style="left:1142px;top:92px;" width="10" height="10" viewBox="0 0 10 10"><path d="M1.5 5l2.5 3.5L8.5 1.5" stroke="#1a1a1a" stroke-width="1.8" fill="none"/></svg>
<div class="t" style="top:91px;font-size:12px;color:#1a1a1a;left:1160px;letter-spacing:0.131px;">GPU Effects (unstable)</div>
<div class="t" style="top:116px;font-size:12px;color:#1a1a1a;left:1160px;">Video Mode</div>
<svg style="left:1297.5px;top:117.3px;" width="5" height="9" viewBox="0 0 5 9"><path d="M0.5 0.5L4.5 4.5 0.5 8.5Z" fill="#333"/></svg>
<div class="t" style="top:141px;font-size:12px;color:#1a1a1a;left:1160px;letter-spacing:0.278px;">Audio Channels</div>
<svg style="left:1297.5px;top:142.4px;" width="5" height="9" viewBox="0 0 5 9"><path d="M0.5 0.5L4.5 4.5 0.5 8.5Z" fill="#333"/></svg>
<div class="t" style="top:166px;font-size:12px;color:#1a1a1a;left:1160px;letter-spacing:0.363px;">Backup</div>
<svg style="left:1297.5px;top:167.4px;" width="5" height="9" viewBox="0 0 5 9"><path d="M0.5 0.5L4.5 4.5 0.5 8.5Z" fill="#333"/></svg>
<div class="t" style="top:187px;font-size:12px;color:#1a1a1a;left:1137px;letter-spacing:0.421px;">User Interface</div>
<div style="left:1222px;top:192px;width:81px;height:1px;background:#c4c4c4;"></div>
<div class="t" style="top:208px;font-size:12px;color:#1a1a1a;left:1160px;letter-spacing:0.105px;">Preview Scaling</div>
<svg style="left:1297.5px;top:209.2px;" width="5" height="9" viewBox="0 0 5 9"><path d="M0.5 0.5L4.5 4.5 0.5 8.5Z" fill="#333"/></svg>
<div class="t" style="top:233px;font-size:12px;color:#1a1a1a;left:1160px;letter-spacing:0.292px;">Proxy</div>
<svg style="left:1297.5px;top:234px;" width="5" height="9" viewBox="0 0 5 9"><path d="M0.5 0.5L4.5 4.5 0.5 8.5Z" fill="#333"/></svg>
<div class="t" style="top:258px;font-size:12px;color:#1a1a1a;left:1160px;letter-spacing:0.165px;">Player</div>
<svg style="left:1297.5px;top:259px;" width="5" height="9" viewBox="0 0 5 9"><path d="M0.5 0.5L4.5 4.5 0.5 8.5Z" fill="#333"/></svg>
<div class="t" style="top:283px;font-size:12px;color:#1a1a1a;left:1160px;letter-spacing:0.261px;">Playlist</div>
<svg style="left:1297.5px;top:283.7px;" width="5" height="9" viewBox="0 0 5 9"><path d="M0.5 0.5L4.5 4.5 0.5 8.5Z" fill="#333"/></svg>
<div class="t" style="top:308px;font-size:12px;color:#1a1a1a;left:1160px;letter-spacing:0.420px;">Timeline</div>
<svg style="left:1297.5px;top:308.8px;" width="5" height="9" viewBox="0 0 5 9"><path d="M0.5 0.5L4.5 4.5 0.5 8.5Z" fill="#333"/></svg>
<div class="t" style="top:333px;font-size:12px;color:#1a1a1a;left:1160px;letter-spacing:0.378px;">Time Format</div>
<svg style="left:1297.5px;top:334px;" width="5" height="9" viewBox="0 0 5 9"><path d="M0.5 0.5L4.5 4.5 0.5 8.5Z" fill="#333"/></svg>
<div class="t" style="top:358px;font-size:12px;color:#1a1a1a;left:1160px;letter-spacing:0.421px;">Language</div>
<svg style="left:1297.5px;top:359px;" width="5" height="9" viewBox="0 0 5 9"><path d="M0.5 0.5L4.5 4.5 0.5 8.5Z" fill="#333"/></svg>
<div style="left:1132.5px;top:376.2px;width:174px;height:24.2px;background:#308cc6;"></div>
<div class="t l" style="top:382px;font-size:12px;color:#fff;left:1160px;letter-spacing:0.373px;">Theme</div>
<svg style="left:1297.5px;top:383.6px;" width="5" height="9" viewBox="0 0 5 9"><path d="M0.5 0.5L4.5 4.5 0.5 8.5Z" fill="#fff"/></svg>
<div class="t" style="top:408px;font-size:12px;color:#1a1a1a;left:1160px;letter-spacing:0.302px;">Job Priority</div>
<svg style="left:1297.5px;top:408.7px;" width="5" height="9" viewBox="0 0 5 9"><path d="M0.5 0.5L4.5 4.5 0.5 8.5Z" fill="#333"/></svg>
<div class="t" style="top:433px;font-size:12px;color:#1a1a1a;left:1160px;letter-spacing:0.380px;">App Data Directory</div>
<svg style="left:1297.5px;top:434px;" width="5" height="9" viewBox="0 0 5 9"><path d="M0.5 0.5L4.5 4.5 0.5 8.5Z" fill="#333"/></svg>
<div class="t" style="top:458px;font-size:12px;color:#1a1a1a;left:1160px;letter-spacing:0.241px;">Audio/Video Device...</div>
<div style="left:1140px;top:482px;width:13.5px;height:13.5px;background:#fff;border:1px solid #a8a8a8;border-radius:2px;"></div>
<div class="t" style="top:483px;font-size:12px;color:#1a1a1a;left:1160px;letter-spacing:0.120px;">Clear Recent on Exit</div>
<div style="left:1137px;top:501px;width:166px;height:1px;background:#c4c4c4;"></div>
<div class="t" style="top:509px;font-size:12px;color:#1a1a1a;left:1160px;letter-spacing:-0.073px;">Reset...</div>
<div style="left:1305.5px;top:376px;width:132px;height:99.5px;background:#fcfcfc;border:1px solid #9c9c9c;box-shadow:1px 1px 2px rgba(0,0,0,0.15);"></div>
<div class="t" style="top:382px;font-size:12px;color:#1a1a1a;left:1333px;letter-spacing:0.166px;">System</div>
<div style="left:1318.5px;top:411.5px;width:5px;height:5px;background:#1a1a1a;border-radius:50%;"></div>
<div class="t" style="top:408px;font-size:12px;color:#1a1a1a;left:1333px;letter-spacing:0.123px;">System Fusion</div>
<div class="t" style="top:433px;font-size:12px;color:#1a1a1a;left:1333px;letter-spacing:0.265px;">Fusion Dark</div>
<div class="t" style="top:458px;font-size:12px;color:#1a1a1a;left:1333px;letter-spacing:0.361px;">Fusion Light</div>
</div>
<div style="left:809px;top:35px;width:8px;height:3px;background:#d98b5a;"></div>
<div style="left:807px;top:37px;width:12px;height:8px;background:#d98b5a;"></div>
<div style="left:961px;top:331px;width:2px;height:4px;background:#9a6a3a;"></div>
<div style="left:961px;top:339px;width:2px;height:5px;background:#9a6a3a;"></div>
<div style="left:961px;top:348px;width:2px;height:3px;background:#9a6a3a;"></div>
<div style="left:961px;top:359px;width:2px;height:3px;background:#9a6a3a;"></div>
<div style="left:961px;top:365px;width:2px;height:4px;background:#9a6a3a;"></div>
<div style="left:961px;top:374px;width:2px;height:2px;background:#9a6a3a;"></div>
<div style="left:957px;top:352px;width:6px;height:4px;background:#7a5538;"></div>
<div style="left:960px;top:350px;width:3px;height:8px;background:#8a6038;"></div>
<div style="left:961px;top:353px;width:2px;height:2px;background:#e8a838;"></div>
<div style="left:0px;top:893px;width:3px;height:8px;background:#e0b040;"></div>
<div style="left:3px;top:895px;width:2px;height:4px;background:#e0b040;"></div></body></html>
